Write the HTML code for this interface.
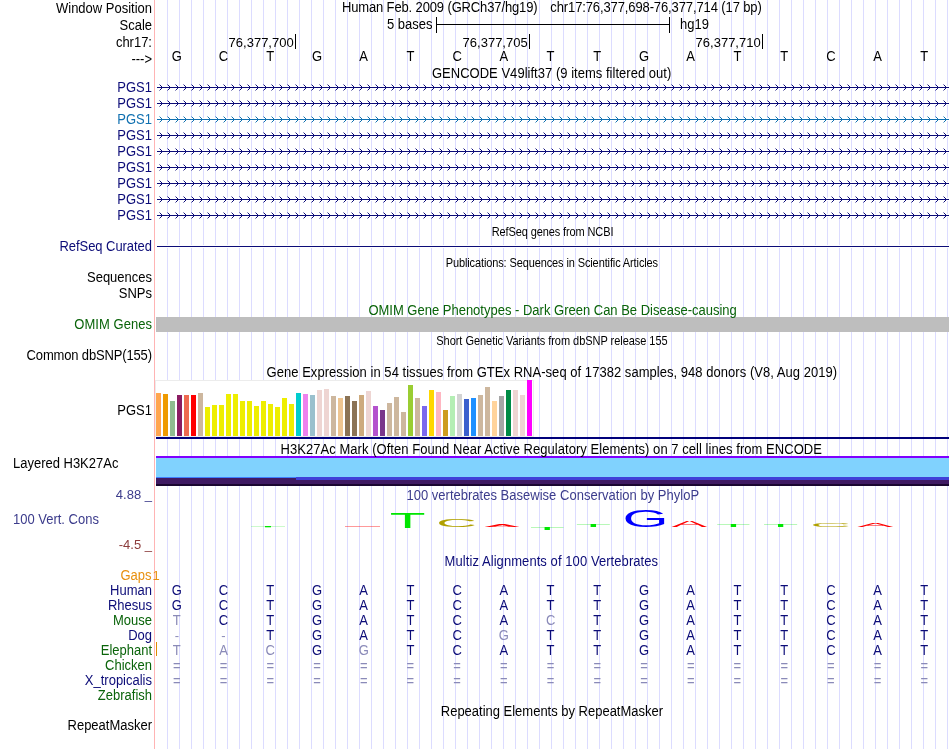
<!DOCTYPE html>
<html><head><meta charset="utf-8"><style>
html,body{margin:0;padding:0;background:#fff;width:950px;height:749px;overflow:hidden}
svg{display:block;will-change:transform}
text{font-family:'Liberation Sans',sans-serif;white-space:pre}
</style></head><body>
<svg width="950" height="749" viewBox="0 0 950 749">
<line x1="167.5" y1="0" x2="167.5" y2="749" stroke="#dcdcff" stroke-width="1"/>
<line x1="179.5" y1="0" x2="179.5" y2="749" stroke="#dcdcff" stroke-width="1"/>
<line x1="191.5" y1="0" x2="191.5" y2="749" stroke="#dcdcff" stroke-width="1"/>
<line x1="203.5" y1="0" x2="203.5" y2="749" stroke="#dcdcff" stroke-width="1"/>
<line x1="215.5" y1="0" x2="215.5" y2="749" stroke="#dcdcff" stroke-width="1"/>
<line x1="227.5" y1="0" x2="227.5" y2="749" stroke="#dcdcff" stroke-width="1"/>
<line x1="239.5" y1="0" x2="239.5" y2="749" stroke="#dcdcff" stroke-width="1"/>
<line x1="251.5" y1="0" x2="251.5" y2="749" stroke="#dcdcff" stroke-width="1"/>
<line x1="263.5" y1="0" x2="263.5" y2="749" stroke="#dcdcff" stroke-width="1"/>
<line x1="275.5" y1="0" x2="275.5" y2="749" stroke="#dcdcff" stroke-width="1"/>
<line x1="287.5" y1="0" x2="287.5" y2="749" stroke="#dcdcff" stroke-width="1"/>
<line x1="299.5" y1="0" x2="299.5" y2="749" stroke="#dcdcff" stroke-width="1"/>
<line x1="311.5" y1="0" x2="311.5" y2="749" stroke="#dcdcff" stroke-width="1"/>
<line x1="323.5" y1="0" x2="323.5" y2="749" stroke="#dcdcff" stroke-width="1"/>
<line x1="335.5" y1="0" x2="335.5" y2="749" stroke="#dcdcff" stroke-width="1"/>
<line x1="347.5" y1="0" x2="347.5" y2="749" stroke="#dcdcff" stroke-width="1"/>
<line x1="359.5" y1="0" x2="359.5" y2="749" stroke="#dcdcff" stroke-width="1"/>
<line x1="371.5" y1="0" x2="371.5" y2="749" stroke="#dcdcff" stroke-width="1"/>
<line x1="383.5" y1="0" x2="383.5" y2="749" stroke="#dcdcff" stroke-width="1"/>
<line x1="395.5" y1="0" x2="395.5" y2="749" stroke="#dcdcff" stroke-width="1"/>
<line x1="407.5" y1="0" x2="407.5" y2="749" stroke="#dcdcff" stroke-width="1"/>
<line x1="419.5" y1="0" x2="419.5" y2="749" stroke="#dcdcff" stroke-width="1"/>
<line x1="431.5" y1="0" x2="431.5" y2="749" stroke="#dcdcff" stroke-width="1"/>
<line x1="443.5" y1="0" x2="443.5" y2="749" stroke="#dcdcff" stroke-width="1"/>
<line x1="455.5" y1="0" x2="455.5" y2="749" stroke="#dcdcff" stroke-width="1"/>
<line x1="467.5" y1="0" x2="467.5" y2="749" stroke="#dcdcff" stroke-width="1"/>
<line x1="479.5" y1="0" x2="479.5" y2="749" stroke="#dcdcff" stroke-width="1"/>
<line x1="491.5" y1="0" x2="491.5" y2="749" stroke="#dcdcff" stroke-width="1"/>
<line x1="503.5" y1="0" x2="503.5" y2="749" stroke="#dcdcff" stroke-width="1"/>
<line x1="515.5" y1="0" x2="515.5" y2="749" stroke="#dcdcff" stroke-width="1"/>
<line x1="527.5" y1="0" x2="527.5" y2="749" stroke="#dcdcff" stroke-width="1"/>
<line x1="539.5" y1="0" x2="539.5" y2="749" stroke="#dcdcff" stroke-width="1"/>
<line x1="551.5" y1="0" x2="551.5" y2="749" stroke="#dcdcff" stroke-width="1"/>
<line x1="563.5" y1="0" x2="563.5" y2="749" stroke="#dcdcff" stroke-width="1"/>
<line x1="575.5" y1="0" x2="575.5" y2="749" stroke="#dcdcff" stroke-width="1"/>
<line x1="587.5" y1="0" x2="587.5" y2="749" stroke="#dcdcff" stroke-width="1"/>
<line x1="599.5" y1="0" x2="599.5" y2="749" stroke="#dcdcff" stroke-width="1"/>
<line x1="611.5" y1="0" x2="611.5" y2="749" stroke="#dcdcff" stroke-width="1"/>
<line x1="623.5" y1="0" x2="623.5" y2="749" stroke="#dcdcff" stroke-width="1"/>
<line x1="635.5" y1="0" x2="635.5" y2="749" stroke="#dcdcff" stroke-width="1"/>
<line x1="647.5" y1="0" x2="647.5" y2="749" stroke="#dcdcff" stroke-width="1"/>
<line x1="659.5" y1="0" x2="659.5" y2="749" stroke="#dcdcff" stroke-width="1"/>
<line x1="671.5" y1="0" x2="671.5" y2="749" stroke="#dcdcff" stroke-width="1"/>
<line x1="683.5" y1="0" x2="683.5" y2="749" stroke="#dcdcff" stroke-width="1"/>
<line x1="695.5" y1="0" x2="695.5" y2="749" stroke="#dcdcff" stroke-width="1"/>
<line x1="707.5" y1="0" x2="707.5" y2="749" stroke="#dcdcff" stroke-width="1"/>
<line x1="719.5" y1="0" x2="719.5" y2="749" stroke="#dcdcff" stroke-width="1"/>
<line x1="731.5" y1="0" x2="731.5" y2="749" stroke="#dcdcff" stroke-width="1"/>
<line x1="743.5" y1="0" x2="743.5" y2="749" stroke="#dcdcff" stroke-width="1"/>
<line x1="755.5" y1="0" x2="755.5" y2="749" stroke="#dcdcff" stroke-width="1"/>
<line x1="767.5" y1="0" x2="767.5" y2="749" stroke="#dcdcff" stroke-width="1"/>
<line x1="779.5" y1="0" x2="779.5" y2="749" stroke="#dcdcff" stroke-width="1"/>
<line x1="791.5" y1="0" x2="791.5" y2="749" stroke="#dcdcff" stroke-width="1"/>
<line x1="803.5" y1="0" x2="803.5" y2="749" stroke="#dcdcff" stroke-width="1"/>
<line x1="815.5" y1="0" x2="815.5" y2="749" stroke="#dcdcff" stroke-width="1"/>
<line x1="827.5" y1="0" x2="827.5" y2="749" stroke="#dcdcff" stroke-width="1"/>
<line x1="839.5" y1="0" x2="839.5" y2="749" stroke="#dcdcff" stroke-width="1"/>
<line x1="851.5" y1="0" x2="851.5" y2="749" stroke="#dcdcff" stroke-width="1"/>
<line x1="863.5" y1="0" x2="863.5" y2="749" stroke="#dcdcff" stroke-width="1"/>
<line x1="875.5" y1="0" x2="875.5" y2="749" stroke="#dcdcff" stroke-width="1"/>
<line x1="887.5" y1="0" x2="887.5" y2="749" stroke="#dcdcff" stroke-width="1"/>
<line x1="899.5" y1="0" x2="899.5" y2="749" stroke="#dcdcff" stroke-width="1"/>
<line x1="911.5" y1="0" x2="911.5" y2="749" stroke="#dcdcff" stroke-width="1"/>
<line x1="923.5" y1="0" x2="923.5" y2="749" stroke="#dcdcff" stroke-width="1"/>
<line x1="935.5" y1="0" x2="935.5" y2="749" stroke="#dcdcff" stroke-width="1"/>
<line x1="947.5" y1="0" x2="947.5" y2="749" stroke="#dcdcff" stroke-width="1"/>
<line x1="154.5" y1="0" x2="154.5" y2="749" stroke="#ffb4b4" stroke-width="1"/>
<text x="152" y="13" font-size="13" fill="#000" text-anchor="end" transform="matrix(1,0,0,1.08,0,-1.040)" >Window Position</text>
<text x="152" y="30" font-size="13" fill="#000" text-anchor="end" transform="matrix(1,0,0,1.08,0,-2.400)" >Scale</text>
<text x="387" y="29" font-size="13" fill="#000" text-anchor="start" transform="matrix(1,0,0,1.08,0,-2.320)" >5 bases</text>
<line x1="436.5" y1="17" x2="436.5" y2="33" stroke="#000"/>
<line x1="669.5" y1="17" x2="669.5" y2="33" stroke="#000"/>
<line x1="436" y1="24.5" x2="670" y2="24.5" stroke="#000"/>
<text x="680" y="29" font-size="13" fill="#000" text-anchor="start" transform="matrix(1,0,0,1.08,0,-2.320)" >hg19</text>
<text x="152" y="47" font-size="13" fill="#000" text-anchor="end" transform="matrix(1,0,0,1.08,0,-3.760)" >chr17:</text>
<text x="293.7" y="47" font-size="13" fill="#000" text-anchor="end"  >76,377,700</text>
<line x1="295.5" y1="34" x2="295.5" y2="49" stroke="#000"/>
<text x="527.7" y="47" font-size="13" fill="#000" text-anchor="end"  >76,377,705</text>
<line x1="529.5" y1="34" x2="529.5" y2="49" stroke="#000"/>
<text x="760.7" y="47" font-size="13" fill="#000" text-anchor="end"  >76,377,710</text>
<line x1="762.5" y1="34" x2="762.5" y2="49" stroke="#000"/>
<text x="152" y="64" font-size="13" fill="#000" text-anchor="end" transform="matrix(1,0,0,1.08,0,-5.120)" >---&gt;</text>
<text x="176.8" y="61" font-size="13" fill="#000" text-anchor="middle" transform="matrix(1,0,0,1.08,0,-4.880)" >G</text>
<text x="223.5" y="61" font-size="13" fill="#000" text-anchor="middle" transform="matrix(1,0,0,1.08,0,-4.880)" >C</text>
<text x="270.2" y="61" font-size="13" fill="#000" text-anchor="middle" transform="matrix(1,0,0,1.08,0,-4.880)" >T</text>
<text x="317.0" y="61" font-size="13" fill="#000" text-anchor="middle" transform="matrix(1,0,0,1.08,0,-4.880)" >G</text>
<text x="363.7" y="61" font-size="13" fill="#000" text-anchor="middle" transform="matrix(1,0,0,1.08,0,-4.880)" >A</text>
<text x="410.4" y="61" font-size="13" fill="#000" text-anchor="middle" transform="matrix(1,0,0,1.08,0,-4.880)" >T</text>
<text x="457.1" y="61" font-size="13" fill="#000" text-anchor="middle" transform="matrix(1,0,0,1.08,0,-4.880)" >C</text>
<text x="503.8" y="61" font-size="13" fill="#000" text-anchor="middle" transform="matrix(1,0,0,1.08,0,-4.880)" >A</text>
<text x="550.6" y="61" font-size="13" fill="#000" text-anchor="middle" transform="matrix(1,0,0,1.08,0,-4.880)" >T</text>
<text x="597.3" y="61" font-size="13" fill="#000" text-anchor="middle" transform="matrix(1,0,0,1.08,0,-4.880)" >T</text>
<text x="644.0" y="61" font-size="13" fill="#000" text-anchor="middle" transform="matrix(1,0,0,1.08,0,-4.880)" >G</text>
<text x="690.7" y="61" font-size="13" fill="#000" text-anchor="middle" transform="matrix(1,0,0,1.08,0,-4.880)" >A</text>
<text x="737.4" y="61" font-size="13" fill="#000" text-anchor="middle" transform="matrix(1,0,0,1.08,0,-4.880)" >T</text>
<text x="784.2" y="61" font-size="13" fill="#000" text-anchor="middle" transform="matrix(1,0,0,1.08,0,-4.880)" >T</text>
<text x="830.9" y="61" font-size="13" fill="#000" text-anchor="middle" transform="matrix(1,0,0,1.08,0,-4.880)" >C</text>
<text x="877.6" y="61" font-size="13" fill="#000" text-anchor="middle" transform="matrix(1,0,0,1.08,0,-4.880)" >A</text>
<text x="924.3" y="61" font-size="13" fill="#000" text-anchor="middle" transform="matrix(1,0,0,1.08,0,-4.880)" >T</text>
<text x="152" y="92" font-size="13" fill="#0c0c78" text-anchor="end" transform="matrix(1,0,0,1.08,0,-7.360)" >PGS1</text>
<rect x="157" y="86" width="792" height="3" fill="#fff"/>
<rect x="157" y="87" width="792" height="1" fill="#0c0c78"/>
<path d="M161,86h1v3h-1zM160,85h1v1h-1zM160,89h1v1h-1zM169,86h1v3h-1zM168,85h1v1h-1zM168,89h1v1h-1zM177,86h1v3h-1zM176,85h1v1h-1zM176,89h1v1h-1zM185,86h1v3h-1zM184,85h1v1h-1zM184,89h1v1h-1zM193,86h1v3h-1zM192,85h1v1h-1zM192,89h1v1h-1zM201,86h1v3h-1zM200,85h1v1h-1zM200,89h1v1h-1zM209,86h1v3h-1zM208,85h1v1h-1zM208,89h1v1h-1zM217,86h1v3h-1zM216,85h1v1h-1zM216,89h1v1h-1zM225,86h1v3h-1zM224,85h1v1h-1zM224,89h1v1h-1zM233,86h1v3h-1zM232,85h1v1h-1zM232,89h1v1h-1zM241,86h1v3h-1zM240,85h1v1h-1zM240,89h1v1h-1zM249,86h1v3h-1zM248,85h1v1h-1zM248,89h1v1h-1zM257,86h1v3h-1zM256,85h1v1h-1zM256,89h1v1h-1zM265,86h1v3h-1zM264,85h1v1h-1zM264,89h1v1h-1zM273,86h1v3h-1zM272,85h1v1h-1zM272,89h1v1h-1zM281,86h1v3h-1zM280,85h1v1h-1zM280,89h1v1h-1zM289,86h1v3h-1zM288,85h1v1h-1zM288,89h1v1h-1zM297,86h1v3h-1zM296,85h1v1h-1zM296,89h1v1h-1zM305,86h1v3h-1zM304,85h1v1h-1zM304,89h1v1h-1zM313,86h1v3h-1zM312,85h1v1h-1zM312,89h1v1h-1zM321,86h1v3h-1zM320,85h1v1h-1zM320,89h1v1h-1zM329,86h1v3h-1zM328,85h1v1h-1zM328,89h1v1h-1zM337,86h1v3h-1zM336,85h1v1h-1zM336,89h1v1h-1zM345,86h1v3h-1zM344,85h1v1h-1zM344,89h1v1h-1zM353,86h1v3h-1zM352,85h1v1h-1zM352,89h1v1h-1zM361,86h1v3h-1zM360,85h1v1h-1zM360,89h1v1h-1zM369,86h1v3h-1zM368,85h1v1h-1zM368,89h1v1h-1zM377,86h1v3h-1zM376,85h1v1h-1zM376,89h1v1h-1zM385,86h1v3h-1zM384,85h1v1h-1zM384,89h1v1h-1zM393,86h1v3h-1zM392,85h1v1h-1zM392,89h1v1h-1zM401,86h1v3h-1zM400,85h1v1h-1zM400,89h1v1h-1zM409,86h1v3h-1zM408,85h1v1h-1zM408,89h1v1h-1zM417,86h1v3h-1zM416,85h1v1h-1zM416,89h1v1h-1zM425,86h1v3h-1zM424,85h1v1h-1zM424,89h1v1h-1zM433,86h1v3h-1zM432,85h1v1h-1zM432,89h1v1h-1zM441,86h1v3h-1zM440,85h1v1h-1zM440,89h1v1h-1zM449,86h1v3h-1zM448,85h1v1h-1zM448,89h1v1h-1zM457,86h1v3h-1zM456,85h1v1h-1zM456,89h1v1h-1zM465,86h1v3h-1zM464,85h1v1h-1zM464,89h1v1h-1zM473,86h1v3h-1zM472,85h1v1h-1zM472,89h1v1h-1zM481,86h1v3h-1zM480,85h1v1h-1zM480,89h1v1h-1zM489,86h1v3h-1zM488,85h1v1h-1zM488,89h1v1h-1zM497,86h1v3h-1zM496,85h1v1h-1zM496,89h1v1h-1zM505,86h1v3h-1zM504,85h1v1h-1zM504,89h1v1h-1zM513,86h1v3h-1zM512,85h1v1h-1zM512,89h1v1h-1zM521,86h1v3h-1zM520,85h1v1h-1zM520,89h1v1h-1zM529,86h1v3h-1zM528,85h1v1h-1zM528,89h1v1h-1zM537,86h1v3h-1zM536,85h1v1h-1zM536,89h1v1h-1zM545,86h1v3h-1zM544,85h1v1h-1zM544,89h1v1h-1zM553,86h1v3h-1zM552,85h1v1h-1zM552,89h1v1h-1zM561,86h1v3h-1zM560,85h1v1h-1zM560,89h1v1h-1zM569,86h1v3h-1zM568,85h1v1h-1zM568,89h1v1h-1zM577,86h1v3h-1zM576,85h1v1h-1zM576,89h1v1h-1zM585,86h1v3h-1zM584,85h1v1h-1zM584,89h1v1h-1zM593,86h1v3h-1zM592,85h1v1h-1zM592,89h1v1h-1zM601,86h1v3h-1zM600,85h1v1h-1zM600,89h1v1h-1zM609,86h1v3h-1zM608,85h1v1h-1zM608,89h1v1h-1zM617,86h1v3h-1zM616,85h1v1h-1zM616,89h1v1h-1zM625,86h1v3h-1zM624,85h1v1h-1zM624,89h1v1h-1zM633,86h1v3h-1zM632,85h1v1h-1zM632,89h1v1h-1zM641,86h1v3h-1zM640,85h1v1h-1zM640,89h1v1h-1zM649,86h1v3h-1zM648,85h1v1h-1zM648,89h1v1h-1zM657,86h1v3h-1zM656,85h1v1h-1zM656,89h1v1h-1zM665,86h1v3h-1zM664,85h1v1h-1zM664,89h1v1h-1zM673,86h1v3h-1zM672,85h1v1h-1zM672,89h1v1h-1zM681,86h1v3h-1zM680,85h1v1h-1zM680,89h1v1h-1zM689,86h1v3h-1zM688,85h1v1h-1zM688,89h1v1h-1zM697,86h1v3h-1zM696,85h1v1h-1zM696,89h1v1h-1zM705,86h1v3h-1zM704,85h1v1h-1zM704,89h1v1h-1zM713,86h1v3h-1zM712,85h1v1h-1zM712,89h1v1h-1zM721,86h1v3h-1zM720,85h1v1h-1zM720,89h1v1h-1zM729,86h1v3h-1zM728,85h1v1h-1zM728,89h1v1h-1zM737,86h1v3h-1zM736,85h1v1h-1zM736,89h1v1h-1zM745,86h1v3h-1zM744,85h1v1h-1zM744,89h1v1h-1zM753,86h1v3h-1zM752,85h1v1h-1zM752,89h1v1h-1zM761,86h1v3h-1zM760,85h1v1h-1zM760,89h1v1h-1zM769,86h1v3h-1zM768,85h1v1h-1zM768,89h1v1h-1zM777,86h1v3h-1zM776,85h1v1h-1zM776,89h1v1h-1zM785,86h1v3h-1zM784,85h1v1h-1zM784,89h1v1h-1zM793,86h1v3h-1zM792,85h1v1h-1zM792,89h1v1h-1zM801,86h1v3h-1zM800,85h1v1h-1zM800,89h1v1h-1zM809,86h1v3h-1zM808,85h1v1h-1zM808,89h1v1h-1zM817,86h1v3h-1zM816,85h1v1h-1zM816,89h1v1h-1zM825,86h1v3h-1zM824,85h1v1h-1zM824,89h1v1h-1zM833,86h1v3h-1zM832,85h1v1h-1zM832,89h1v1h-1zM841,86h1v3h-1zM840,85h1v1h-1zM840,89h1v1h-1zM849,86h1v3h-1zM848,85h1v1h-1zM848,89h1v1h-1zM857,86h1v3h-1zM856,85h1v1h-1zM856,89h1v1h-1zM865,86h1v3h-1zM864,85h1v1h-1zM864,89h1v1h-1zM873,86h1v3h-1zM872,85h1v1h-1zM872,89h1v1h-1zM881,86h1v3h-1zM880,85h1v1h-1zM880,89h1v1h-1zM889,86h1v3h-1zM888,85h1v1h-1zM888,89h1v1h-1zM897,86h1v3h-1zM896,85h1v1h-1zM896,89h1v1h-1zM905,86h1v3h-1zM904,85h1v1h-1zM904,89h1v1h-1zM913,86h1v3h-1zM912,85h1v1h-1zM912,89h1v1h-1zM921,86h1v3h-1zM920,85h1v1h-1zM920,89h1v1h-1zM929,86h1v3h-1zM928,85h1v1h-1zM928,89h1v1h-1zM937,86h1v3h-1zM936,85h1v1h-1zM936,89h1v1h-1zM945,86h1v3h-1zM944,85h1v1h-1zM944,89h1v1h-1z" fill="#0c0c78"/>
<path d="M159,84h1v1h-1zM159,90h1v1h-1zM167,84h1v1h-1zM167,90h1v1h-1zM175,84h1v1h-1zM175,90h1v1h-1zM183,84h1v1h-1zM183,90h1v1h-1zM191,84h1v1h-1zM191,90h1v1h-1zM199,84h1v1h-1zM199,90h1v1h-1zM207,84h1v1h-1zM207,90h1v1h-1zM215,84h1v1h-1zM215,90h1v1h-1zM223,84h1v1h-1zM223,90h1v1h-1zM231,84h1v1h-1zM231,90h1v1h-1zM239,84h1v1h-1zM239,90h1v1h-1zM247,84h1v1h-1zM247,90h1v1h-1zM255,84h1v1h-1zM255,90h1v1h-1zM263,84h1v1h-1zM263,90h1v1h-1zM271,84h1v1h-1zM271,90h1v1h-1zM279,84h1v1h-1zM279,90h1v1h-1zM287,84h1v1h-1zM287,90h1v1h-1zM295,84h1v1h-1zM295,90h1v1h-1zM303,84h1v1h-1zM303,90h1v1h-1zM311,84h1v1h-1zM311,90h1v1h-1zM319,84h1v1h-1zM319,90h1v1h-1zM327,84h1v1h-1zM327,90h1v1h-1zM335,84h1v1h-1zM335,90h1v1h-1zM343,84h1v1h-1zM343,90h1v1h-1zM351,84h1v1h-1zM351,90h1v1h-1zM359,84h1v1h-1zM359,90h1v1h-1zM367,84h1v1h-1zM367,90h1v1h-1zM375,84h1v1h-1zM375,90h1v1h-1zM383,84h1v1h-1zM383,90h1v1h-1zM391,84h1v1h-1zM391,90h1v1h-1zM399,84h1v1h-1zM399,90h1v1h-1zM407,84h1v1h-1zM407,90h1v1h-1zM415,84h1v1h-1zM415,90h1v1h-1zM423,84h1v1h-1zM423,90h1v1h-1zM431,84h1v1h-1zM431,90h1v1h-1zM439,84h1v1h-1zM439,90h1v1h-1zM447,84h1v1h-1zM447,90h1v1h-1zM455,84h1v1h-1zM455,90h1v1h-1zM463,84h1v1h-1zM463,90h1v1h-1zM471,84h1v1h-1zM471,90h1v1h-1zM479,84h1v1h-1zM479,90h1v1h-1zM487,84h1v1h-1zM487,90h1v1h-1zM495,84h1v1h-1zM495,90h1v1h-1zM503,84h1v1h-1zM503,90h1v1h-1zM511,84h1v1h-1zM511,90h1v1h-1zM519,84h1v1h-1zM519,90h1v1h-1zM527,84h1v1h-1zM527,90h1v1h-1zM535,84h1v1h-1zM535,90h1v1h-1zM543,84h1v1h-1zM543,90h1v1h-1zM551,84h1v1h-1zM551,90h1v1h-1zM559,84h1v1h-1zM559,90h1v1h-1zM567,84h1v1h-1zM567,90h1v1h-1zM575,84h1v1h-1zM575,90h1v1h-1zM583,84h1v1h-1zM583,90h1v1h-1zM591,84h1v1h-1zM591,90h1v1h-1zM599,84h1v1h-1zM599,90h1v1h-1zM607,84h1v1h-1zM607,90h1v1h-1zM615,84h1v1h-1zM615,90h1v1h-1zM623,84h1v1h-1zM623,90h1v1h-1zM631,84h1v1h-1zM631,90h1v1h-1zM639,84h1v1h-1zM639,90h1v1h-1zM647,84h1v1h-1zM647,90h1v1h-1zM655,84h1v1h-1zM655,90h1v1h-1zM663,84h1v1h-1zM663,90h1v1h-1zM671,84h1v1h-1zM671,90h1v1h-1zM679,84h1v1h-1zM679,90h1v1h-1zM687,84h1v1h-1zM687,90h1v1h-1zM695,84h1v1h-1zM695,90h1v1h-1zM703,84h1v1h-1zM703,90h1v1h-1zM711,84h1v1h-1zM711,90h1v1h-1zM719,84h1v1h-1zM719,90h1v1h-1zM727,84h1v1h-1zM727,90h1v1h-1zM735,84h1v1h-1zM735,90h1v1h-1zM743,84h1v1h-1zM743,90h1v1h-1zM751,84h1v1h-1zM751,90h1v1h-1zM759,84h1v1h-1zM759,90h1v1h-1zM767,84h1v1h-1zM767,90h1v1h-1zM775,84h1v1h-1zM775,90h1v1h-1zM783,84h1v1h-1zM783,90h1v1h-1zM791,84h1v1h-1zM791,90h1v1h-1zM799,84h1v1h-1zM799,90h1v1h-1zM807,84h1v1h-1zM807,90h1v1h-1zM815,84h1v1h-1zM815,90h1v1h-1zM823,84h1v1h-1zM823,90h1v1h-1zM831,84h1v1h-1zM831,90h1v1h-1zM839,84h1v1h-1zM839,90h1v1h-1zM847,84h1v1h-1zM847,90h1v1h-1zM855,84h1v1h-1zM855,90h1v1h-1zM863,84h1v1h-1zM863,90h1v1h-1zM871,84h1v1h-1zM871,90h1v1h-1zM879,84h1v1h-1zM879,90h1v1h-1zM887,84h1v1h-1zM887,90h1v1h-1zM895,84h1v1h-1zM895,90h1v1h-1zM903,84h1v1h-1zM903,90h1v1h-1zM911,84h1v1h-1zM911,90h1v1h-1zM919,84h1v1h-1zM919,90h1v1h-1zM927,84h1v1h-1zM927,90h1v1h-1zM935,84h1v1h-1zM935,90h1v1h-1zM943,84h1v1h-1zM943,90h1v1h-1z" fill="#0c0c78" opacity="0.45"/>
<text x="152" y="108" font-size="13" fill="#0c0c78" text-anchor="end" transform="matrix(1,0,0,1.08,0,-8.640)" >PGS1</text>
<rect x="157" y="102" width="792" height="3" fill="#fff"/>
<rect x="157" y="103" width="792" height="1" fill="#0c0c78"/>
<path d="M161,102h1v3h-1zM160,101h1v1h-1zM160,105h1v1h-1zM169,102h1v3h-1zM168,101h1v1h-1zM168,105h1v1h-1zM177,102h1v3h-1zM176,101h1v1h-1zM176,105h1v1h-1zM185,102h1v3h-1zM184,101h1v1h-1zM184,105h1v1h-1zM193,102h1v3h-1zM192,101h1v1h-1zM192,105h1v1h-1zM201,102h1v3h-1zM200,101h1v1h-1zM200,105h1v1h-1zM209,102h1v3h-1zM208,101h1v1h-1zM208,105h1v1h-1zM217,102h1v3h-1zM216,101h1v1h-1zM216,105h1v1h-1zM225,102h1v3h-1zM224,101h1v1h-1zM224,105h1v1h-1zM233,102h1v3h-1zM232,101h1v1h-1zM232,105h1v1h-1zM241,102h1v3h-1zM240,101h1v1h-1zM240,105h1v1h-1zM249,102h1v3h-1zM248,101h1v1h-1zM248,105h1v1h-1zM257,102h1v3h-1zM256,101h1v1h-1zM256,105h1v1h-1zM265,102h1v3h-1zM264,101h1v1h-1zM264,105h1v1h-1zM273,102h1v3h-1zM272,101h1v1h-1zM272,105h1v1h-1zM281,102h1v3h-1zM280,101h1v1h-1zM280,105h1v1h-1zM289,102h1v3h-1zM288,101h1v1h-1zM288,105h1v1h-1zM297,102h1v3h-1zM296,101h1v1h-1zM296,105h1v1h-1zM305,102h1v3h-1zM304,101h1v1h-1zM304,105h1v1h-1zM313,102h1v3h-1zM312,101h1v1h-1zM312,105h1v1h-1zM321,102h1v3h-1zM320,101h1v1h-1zM320,105h1v1h-1zM329,102h1v3h-1zM328,101h1v1h-1zM328,105h1v1h-1zM337,102h1v3h-1zM336,101h1v1h-1zM336,105h1v1h-1zM345,102h1v3h-1zM344,101h1v1h-1zM344,105h1v1h-1zM353,102h1v3h-1zM352,101h1v1h-1zM352,105h1v1h-1zM361,102h1v3h-1zM360,101h1v1h-1zM360,105h1v1h-1zM369,102h1v3h-1zM368,101h1v1h-1zM368,105h1v1h-1zM377,102h1v3h-1zM376,101h1v1h-1zM376,105h1v1h-1zM385,102h1v3h-1zM384,101h1v1h-1zM384,105h1v1h-1zM393,102h1v3h-1zM392,101h1v1h-1zM392,105h1v1h-1zM401,102h1v3h-1zM400,101h1v1h-1zM400,105h1v1h-1zM409,102h1v3h-1zM408,101h1v1h-1zM408,105h1v1h-1zM417,102h1v3h-1zM416,101h1v1h-1zM416,105h1v1h-1zM425,102h1v3h-1zM424,101h1v1h-1zM424,105h1v1h-1zM433,102h1v3h-1zM432,101h1v1h-1zM432,105h1v1h-1zM441,102h1v3h-1zM440,101h1v1h-1zM440,105h1v1h-1zM449,102h1v3h-1zM448,101h1v1h-1zM448,105h1v1h-1zM457,102h1v3h-1zM456,101h1v1h-1zM456,105h1v1h-1zM465,102h1v3h-1zM464,101h1v1h-1zM464,105h1v1h-1zM473,102h1v3h-1zM472,101h1v1h-1zM472,105h1v1h-1zM481,102h1v3h-1zM480,101h1v1h-1zM480,105h1v1h-1zM489,102h1v3h-1zM488,101h1v1h-1zM488,105h1v1h-1zM497,102h1v3h-1zM496,101h1v1h-1zM496,105h1v1h-1zM505,102h1v3h-1zM504,101h1v1h-1zM504,105h1v1h-1zM513,102h1v3h-1zM512,101h1v1h-1zM512,105h1v1h-1zM521,102h1v3h-1zM520,101h1v1h-1zM520,105h1v1h-1zM529,102h1v3h-1zM528,101h1v1h-1zM528,105h1v1h-1zM537,102h1v3h-1zM536,101h1v1h-1zM536,105h1v1h-1zM545,102h1v3h-1zM544,101h1v1h-1zM544,105h1v1h-1zM553,102h1v3h-1zM552,101h1v1h-1zM552,105h1v1h-1zM561,102h1v3h-1zM560,101h1v1h-1zM560,105h1v1h-1zM569,102h1v3h-1zM568,101h1v1h-1zM568,105h1v1h-1zM577,102h1v3h-1zM576,101h1v1h-1zM576,105h1v1h-1zM585,102h1v3h-1zM584,101h1v1h-1zM584,105h1v1h-1zM593,102h1v3h-1zM592,101h1v1h-1zM592,105h1v1h-1zM601,102h1v3h-1zM600,101h1v1h-1zM600,105h1v1h-1zM609,102h1v3h-1zM608,101h1v1h-1zM608,105h1v1h-1zM617,102h1v3h-1zM616,101h1v1h-1zM616,105h1v1h-1zM625,102h1v3h-1zM624,101h1v1h-1zM624,105h1v1h-1zM633,102h1v3h-1zM632,101h1v1h-1zM632,105h1v1h-1zM641,102h1v3h-1zM640,101h1v1h-1zM640,105h1v1h-1zM649,102h1v3h-1zM648,101h1v1h-1zM648,105h1v1h-1zM657,102h1v3h-1zM656,101h1v1h-1zM656,105h1v1h-1zM665,102h1v3h-1zM664,101h1v1h-1zM664,105h1v1h-1zM673,102h1v3h-1zM672,101h1v1h-1zM672,105h1v1h-1zM681,102h1v3h-1zM680,101h1v1h-1zM680,105h1v1h-1zM689,102h1v3h-1zM688,101h1v1h-1zM688,105h1v1h-1zM697,102h1v3h-1zM696,101h1v1h-1zM696,105h1v1h-1zM705,102h1v3h-1zM704,101h1v1h-1zM704,105h1v1h-1zM713,102h1v3h-1zM712,101h1v1h-1zM712,105h1v1h-1zM721,102h1v3h-1zM720,101h1v1h-1zM720,105h1v1h-1zM729,102h1v3h-1zM728,101h1v1h-1zM728,105h1v1h-1zM737,102h1v3h-1zM736,101h1v1h-1zM736,105h1v1h-1zM745,102h1v3h-1zM744,101h1v1h-1zM744,105h1v1h-1zM753,102h1v3h-1zM752,101h1v1h-1zM752,105h1v1h-1zM761,102h1v3h-1zM760,101h1v1h-1zM760,105h1v1h-1zM769,102h1v3h-1zM768,101h1v1h-1zM768,105h1v1h-1zM777,102h1v3h-1zM776,101h1v1h-1zM776,105h1v1h-1zM785,102h1v3h-1zM784,101h1v1h-1zM784,105h1v1h-1zM793,102h1v3h-1zM792,101h1v1h-1zM792,105h1v1h-1zM801,102h1v3h-1zM800,101h1v1h-1zM800,105h1v1h-1zM809,102h1v3h-1zM808,101h1v1h-1zM808,105h1v1h-1zM817,102h1v3h-1zM816,101h1v1h-1zM816,105h1v1h-1zM825,102h1v3h-1zM824,101h1v1h-1zM824,105h1v1h-1zM833,102h1v3h-1zM832,101h1v1h-1zM832,105h1v1h-1zM841,102h1v3h-1zM840,101h1v1h-1zM840,105h1v1h-1zM849,102h1v3h-1zM848,101h1v1h-1zM848,105h1v1h-1zM857,102h1v3h-1zM856,101h1v1h-1zM856,105h1v1h-1zM865,102h1v3h-1zM864,101h1v1h-1zM864,105h1v1h-1zM873,102h1v3h-1zM872,101h1v1h-1zM872,105h1v1h-1zM881,102h1v3h-1zM880,101h1v1h-1zM880,105h1v1h-1zM889,102h1v3h-1zM888,101h1v1h-1zM888,105h1v1h-1zM897,102h1v3h-1zM896,101h1v1h-1zM896,105h1v1h-1zM905,102h1v3h-1zM904,101h1v1h-1zM904,105h1v1h-1zM913,102h1v3h-1zM912,101h1v1h-1zM912,105h1v1h-1zM921,102h1v3h-1zM920,101h1v1h-1zM920,105h1v1h-1zM929,102h1v3h-1zM928,101h1v1h-1zM928,105h1v1h-1zM937,102h1v3h-1zM936,101h1v1h-1zM936,105h1v1h-1zM945,102h1v3h-1zM944,101h1v1h-1zM944,105h1v1h-1z" fill="#0c0c78"/>
<path d="M159,100h1v1h-1zM159,106h1v1h-1zM167,100h1v1h-1zM167,106h1v1h-1zM175,100h1v1h-1zM175,106h1v1h-1zM183,100h1v1h-1zM183,106h1v1h-1zM191,100h1v1h-1zM191,106h1v1h-1zM199,100h1v1h-1zM199,106h1v1h-1zM207,100h1v1h-1zM207,106h1v1h-1zM215,100h1v1h-1zM215,106h1v1h-1zM223,100h1v1h-1zM223,106h1v1h-1zM231,100h1v1h-1zM231,106h1v1h-1zM239,100h1v1h-1zM239,106h1v1h-1zM247,100h1v1h-1zM247,106h1v1h-1zM255,100h1v1h-1zM255,106h1v1h-1zM263,100h1v1h-1zM263,106h1v1h-1zM271,100h1v1h-1zM271,106h1v1h-1zM279,100h1v1h-1zM279,106h1v1h-1zM287,100h1v1h-1zM287,106h1v1h-1zM295,100h1v1h-1zM295,106h1v1h-1zM303,100h1v1h-1zM303,106h1v1h-1zM311,100h1v1h-1zM311,106h1v1h-1zM319,100h1v1h-1zM319,106h1v1h-1zM327,100h1v1h-1zM327,106h1v1h-1zM335,100h1v1h-1zM335,106h1v1h-1zM343,100h1v1h-1zM343,106h1v1h-1zM351,100h1v1h-1zM351,106h1v1h-1zM359,100h1v1h-1zM359,106h1v1h-1zM367,100h1v1h-1zM367,106h1v1h-1zM375,100h1v1h-1zM375,106h1v1h-1zM383,100h1v1h-1zM383,106h1v1h-1zM391,100h1v1h-1zM391,106h1v1h-1zM399,100h1v1h-1zM399,106h1v1h-1zM407,100h1v1h-1zM407,106h1v1h-1zM415,100h1v1h-1zM415,106h1v1h-1zM423,100h1v1h-1zM423,106h1v1h-1zM431,100h1v1h-1zM431,106h1v1h-1zM439,100h1v1h-1zM439,106h1v1h-1zM447,100h1v1h-1zM447,106h1v1h-1zM455,100h1v1h-1zM455,106h1v1h-1zM463,100h1v1h-1zM463,106h1v1h-1zM471,100h1v1h-1zM471,106h1v1h-1zM479,100h1v1h-1zM479,106h1v1h-1zM487,100h1v1h-1zM487,106h1v1h-1zM495,100h1v1h-1zM495,106h1v1h-1zM503,100h1v1h-1zM503,106h1v1h-1zM511,100h1v1h-1zM511,106h1v1h-1zM519,100h1v1h-1zM519,106h1v1h-1zM527,100h1v1h-1zM527,106h1v1h-1zM535,100h1v1h-1zM535,106h1v1h-1zM543,100h1v1h-1zM543,106h1v1h-1zM551,100h1v1h-1zM551,106h1v1h-1zM559,100h1v1h-1zM559,106h1v1h-1zM567,100h1v1h-1zM567,106h1v1h-1zM575,100h1v1h-1zM575,106h1v1h-1zM583,100h1v1h-1zM583,106h1v1h-1zM591,100h1v1h-1zM591,106h1v1h-1zM599,100h1v1h-1zM599,106h1v1h-1zM607,100h1v1h-1zM607,106h1v1h-1zM615,100h1v1h-1zM615,106h1v1h-1zM623,100h1v1h-1zM623,106h1v1h-1zM631,100h1v1h-1zM631,106h1v1h-1zM639,100h1v1h-1zM639,106h1v1h-1zM647,100h1v1h-1zM647,106h1v1h-1zM655,100h1v1h-1zM655,106h1v1h-1zM663,100h1v1h-1zM663,106h1v1h-1zM671,100h1v1h-1zM671,106h1v1h-1zM679,100h1v1h-1zM679,106h1v1h-1zM687,100h1v1h-1zM687,106h1v1h-1zM695,100h1v1h-1zM695,106h1v1h-1zM703,100h1v1h-1zM703,106h1v1h-1zM711,100h1v1h-1zM711,106h1v1h-1zM719,100h1v1h-1zM719,106h1v1h-1zM727,100h1v1h-1zM727,106h1v1h-1zM735,100h1v1h-1zM735,106h1v1h-1zM743,100h1v1h-1zM743,106h1v1h-1zM751,100h1v1h-1zM751,106h1v1h-1zM759,100h1v1h-1zM759,106h1v1h-1zM767,100h1v1h-1zM767,106h1v1h-1zM775,100h1v1h-1zM775,106h1v1h-1zM783,100h1v1h-1zM783,106h1v1h-1zM791,100h1v1h-1zM791,106h1v1h-1zM799,100h1v1h-1zM799,106h1v1h-1zM807,100h1v1h-1zM807,106h1v1h-1zM815,100h1v1h-1zM815,106h1v1h-1zM823,100h1v1h-1zM823,106h1v1h-1zM831,100h1v1h-1zM831,106h1v1h-1zM839,100h1v1h-1zM839,106h1v1h-1zM847,100h1v1h-1zM847,106h1v1h-1zM855,100h1v1h-1zM855,106h1v1h-1zM863,100h1v1h-1zM863,106h1v1h-1zM871,100h1v1h-1zM871,106h1v1h-1zM879,100h1v1h-1zM879,106h1v1h-1zM887,100h1v1h-1zM887,106h1v1h-1zM895,100h1v1h-1zM895,106h1v1h-1zM903,100h1v1h-1zM903,106h1v1h-1zM911,100h1v1h-1zM911,106h1v1h-1zM919,100h1v1h-1zM919,106h1v1h-1zM927,100h1v1h-1zM927,106h1v1h-1zM935,100h1v1h-1zM935,106h1v1h-1zM943,100h1v1h-1zM943,106h1v1h-1z" fill="#0c0c78" opacity="0.45"/>
<text x="152" y="124" font-size="13" fill="#1070b0" text-anchor="end" transform="matrix(1,0,0,1.08,0,-9.920)" >PGS1</text>
<rect x="157" y="118" width="792" height="3" fill="#fff"/>
<rect x="157" y="119" width="792" height="1" fill="#1070b0"/>
<path d="M161,118h1v3h-1zM160,117h1v1h-1zM160,121h1v1h-1zM169,118h1v3h-1zM168,117h1v1h-1zM168,121h1v1h-1zM177,118h1v3h-1zM176,117h1v1h-1zM176,121h1v1h-1zM185,118h1v3h-1zM184,117h1v1h-1zM184,121h1v1h-1zM193,118h1v3h-1zM192,117h1v1h-1zM192,121h1v1h-1zM201,118h1v3h-1zM200,117h1v1h-1zM200,121h1v1h-1zM209,118h1v3h-1zM208,117h1v1h-1zM208,121h1v1h-1zM217,118h1v3h-1zM216,117h1v1h-1zM216,121h1v1h-1zM225,118h1v3h-1zM224,117h1v1h-1zM224,121h1v1h-1zM233,118h1v3h-1zM232,117h1v1h-1zM232,121h1v1h-1zM241,118h1v3h-1zM240,117h1v1h-1zM240,121h1v1h-1zM249,118h1v3h-1zM248,117h1v1h-1zM248,121h1v1h-1zM257,118h1v3h-1zM256,117h1v1h-1zM256,121h1v1h-1zM265,118h1v3h-1zM264,117h1v1h-1zM264,121h1v1h-1zM273,118h1v3h-1zM272,117h1v1h-1zM272,121h1v1h-1zM281,118h1v3h-1zM280,117h1v1h-1zM280,121h1v1h-1zM289,118h1v3h-1zM288,117h1v1h-1zM288,121h1v1h-1zM297,118h1v3h-1zM296,117h1v1h-1zM296,121h1v1h-1zM305,118h1v3h-1zM304,117h1v1h-1zM304,121h1v1h-1zM313,118h1v3h-1zM312,117h1v1h-1zM312,121h1v1h-1zM321,118h1v3h-1zM320,117h1v1h-1zM320,121h1v1h-1zM329,118h1v3h-1zM328,117h1v1h-1zM328,121h1v1h-1zM337,118h1v3h-1zM336,117h1v1h-1zM336,121h1v1h-1zM345,118h1v3h-1zM344,117h1v1h-1zM344,121h1v1h-1zM353,118h1v3h-1zM352,117h1v1h-1zM352,121h1v1h-1zM361,118h1v3h-1zM360,117h1v1h-1zM360,121h1v1h-1zM369,118h1v3h-1zM368,117h1v1h-1zM368,121h1v1h-1zM377,118h1v3h-1zM376,117h1v1h-1zM376,121h1v1h-1zM385,118h1v3h-1zM384,117h1v1h-1zM384,121h1v1h-1zM393,118h1v3h-1zM392,117h1v1h-1zM392,121h1v1h-1zM401,118h1v3h-1zM400,117h1v1h-1zM400,121h1v1h-1zM409,118h1v3h-1zM408,117h1v1h-1zM408,121h1v1h-1zM417,118h1v3h-1zM416,117h1v1h-1zM416,121h1v1h-1zM425,118h1v3h-1zM424,117h1v1h-1zM424,121h1v1h-1zM433,118h1v3h-1zM432,117h1v1h-1zM432,121h1v1h-1zM441,118h1v3h-1zM440,117h1v1h-1zM440,121h1v1h-1zM449,118h1v3h-1zM448,117h1v1h-1zM448,121h1v1h-1zM457,118h1v3h-1zM456,117h1v1h-1zM456,121h1v1h-1zM465,118h1v3h-1zM464,117h1v1h-1zM464,121h1v1h-1zM473,118h1v3h-1zM472,117h1v1h-1zM472,121h1v1h-1zM481,118h1v3h-1zM480,117h1v1h-1zM480,121h1v1h-1zM489,118h1v3h-1zM488,117h1v1h-1zM488,121h1v1h-1zM497,118h1v3h-1zM496,117h1v1h-1zM496,121h1v1h-1zM505,118h1v3h-1zM504,117h1v1h-1zM504,121h1v1h-1zM513,118h1v3h-1zM512,117h1v1h-1zM512,121h1v1h-1zM521,118h1v3h-1zM520,117h1v1h-1zM520,121h1v1h-1zM529,118h1v3h-1zM528,117h1v1h-1zM528,121h1v1h-1zM537,118h1v3h-1zM536,117h1v1h-1zM536,121h1v1h-1zM545,118h1v3h-1zM544,117h1v1h-1zM544,121h1v1h-1zM553,118h1v3h-1zM552,117h1v1h-1zM552,121h1v1h-1zM561,118h1v3h-1zM560,117h1v1h-1zM560,121h1v1h-1zM569,118h1v3h-1zM568,117h1v1h-1zM568,121h1v1h-1zM577,118h1v3h-1zM576,117h1v1h-1zM576,121h1v1h-1zM585,118h1v3h-1zM584,117h1v1h-1zM584,121h1v1h-1zM593,118h1v3h-1zM592,117h1v1h-1zM592,121h1v1h-1zM601,118h1v3h-1zM600,117h1v1h-1zM600,121h1v1h-1zM609,118h1v3h-1zM608,117h1v1h-1zM608,121h1v1h-1zM617,118h1v3h-1zM616,117h1v1h-1zM616,121h1v1h-1zM625,118h1v3h-1zM624,117h1v1h-1zM624,121h1v1h-1zM633,118h1v3h-1zM632,117h1v1h-1zM632,121h1v1h-1zM641,118h1v3h-1zM640,117h1v1h-1zM640,121h1v1h-1zM649,118h1v3h-1zM648,117h1v1h-1zM648,121h1v1h-1zM657,118h1v3h-1zM656,117h1v1h-1zM656,121h1v1h-1zM665,118h1v3h-1zM664,117h1v1h-1zM664,121h1v1h-1zM673,118h1v3h-1zM672,117h1v1h-1zM672,121h1v1h-1zM681,118h1v3h-1zM680,117h1v1h-1zM680,121h1v1h-1zM689,118h1v3h-1zM688,117h1v1h-1zM688,121h1v1h-1zM697,118h1v3h-1zM696,117h1v1h-1zM696,121h1v1h-1zM705,118h1v3h-1zM704,117h1v1h-1zM704,121h1v1h-1zM713,118h1v3h-1zM712,117h1v1h-1zM712,121h1v1h-1zM721,118h1v3h-1zM720,117h1v1h-1zM720,121h1v1h-1zM729,118h1v3h-1zM728,117h1v1h-1zM728,121h1v1h-1zM737,118h1v3h-1zM736,117h1v1h-1zM736,121h1v1h-1zM745,118h1v3h-1zM744,117h1v1h-1zM744,121h1v1h-1zM753,118h1v3h-1zM752,117h1v1h-1zM752,121h1v1h-1zM761,118h1v3h-1zM760,117h1v1h-1zM760,121h1v1h-1zM769,118h1v3h-1zM768,117h1v1h-1zM768,121h1v1h-1zM777,118h1v3h-1zM776,117h1v1h-1zM776,121h1v1h-1zM785,118h1v3h-1zM784,117h1v1h-1zM784,121h1v1h-1zM793,118h1v3h-1zM792,117h1v1h-1zM792,121h1v1h-1zM801,118h1v3h-1zM800,117h1v1h-1zM800,121h1v1h-1zM809,118h1v3h-1zM808,117h1v1h-1zM808,121h1v1h-1zM817,118h1v3h-1zM816,117h1v1h-1zM816,121h1v1h-1zM825,118h1v3h-1zM824,117h1v1h-1zM824,121h1v1h-1zM833,118h1v3h-1zM832,117h1v1h-1zM832,121h1v1h-1zM841,118h1v3h-1zM840,117h1v1h-1zM840,121h1v1h-1zM849,118h1v3h-1zM848,117h1v1h-1zM848,121h1v1h-1zM857,118h1v3h-1zM856,117h1v1h-1zM856,121h1v1h-1zM865,118h1v3h-1zM864,117h1v1h-1zM864,121h1v1h-1zM873,118h1v3h-1zM872,117h1v1h-1zM872,121h1v1h-1zM881,118h1v3h-1zM880,117h1v1h-1zM880,121h1v1h-1zM889,118h1v3h-1zM888,117h1v1h-1zM888,121h1v1h-1zM897,118h1v3h-1zM896,117h1v1h-1zM896,121h1v1h-1zM905,118h1v3h-1zM904,117h1v1h-1zM904,121h1v1h-1zM913,118h1v3h-1zM912,117h1v1h-1zM912,121h1v1h-1zM921,118h1v3h-1zM920,117h1v1h-1zM920,121h1v1h-1zM929,118h1v3h-1zM928,117h1v1h-1zM928,121h1v1h-1zM937,118h1v3h-1zM936,117h1v1h-1zM936,121h1v1h-1zM945,118h1v3h-1zM944,117h1v1h-1zM944,121h1v1h-1z" fill="#1070b0"/>
<path d="M159,116h1v1h-1zM159,122h1v1h-1zM167,116h1v1h-1zM167,122h1v1h-1zM175,116h1v1h-1zM175,122h1v1h-1zM183,116h1v1h-1zM183,122h1v1h-1zM191,116h1v1h-1zM191,122h1v1h-1zM199,116h1v1h-1zM199,122h1v1h-1zM207,116h1v1h-1zM207,122h1v1h-1zM215,116h1v1h-1zM215,122h1v1h-1zM223,116h1v1h-1zM223,122h1v1h-1zM231,116h1v1h-1zM231,122h1v1h-1zM239,116h1v1h-1zM239,122h1v1h-1zM247,116h1v1h-1zM247,122h1v1h-1zM255,116h1v1h-1zM255,122h1v1h-1zM263,116h1v1h-1zM263,122h1v1h-1zM271,116h1v1h-1zM271,122h1v1h-1zM279,116h1v1h-1zM279,122h1v1h-1zM287,116h1v1h-1zM287,122h1v1h-1zM295,116h1v1h-1zM295,122h1v1h-1zM303,116h1v1h-1zM303,122h1v1h-1zM311,116h1v1h-1zM311,122h1v1h-1zM319,116h1v1h-1zM319,122h1v1h-1zM327,116h1v1h-1zM327,122h1v1h-1zM335,116h1v1h-1zM335,122h1v1h-1zM343,116h1v1h-1zM343,122h1v1h-1zM351,116h1v1h-1zM351,122h1v1h-1zM359,116h1v1h-1zM359,122h1v1h-1zM367,116h1v1h-1zM367,122h1v1h-1zM375,116h1v1h-1zM375,122h1v1h-1zM383,116h1v1h-1zM383,122h1v1h-1zM391,116h1v1h-1zM391,122h1v1h-1zM399,116h1v1h-1zM399,122h1v1h-1zM407,116h1v1h-1zM407,122h1v1h-1zM415,116h1v1h-1zM415,122h1v1h-1zM423,116h1v1h-1zM423,122h1v1h-1zM431,116h1v1h-1zM431,122h1v1h-1zM439,116h1v1h-1zM439,122h1v1h-1zM447,116h1v1h-1zM447,122h1v1h-1zM455,116h1v1h-1zM455,122h1v1h-1zM463,116h1v1h-1zM463,122h1v1h-1zM471,116h1v1h-1zM471,122h1v1h-1zM479,116h1v1h-1zM479,122h1v1h-1zM487,116h1v1h-1zM487,122h1v1h-1zM495,116h1v1h-1zM495,122h1v1h-1zM503,116h1v1h-1zM503,122h1v1h-1zM511,116h1v1h-1zM511,122h1v1h-1zM519,116h1v1h-1zM519,122h1v1h-1zM527,116h1v1h-1zM527,122h1v1h-1zM535,116h1v1h-1zM535,122h1v1h-1zM543,116h1v1h-1zM543,122h1v1h-1zM551,116h1v1h-1zM551,122h1v1h-1zM559,116h1v1h-1zM559,122h1v1h-1zM567,116h1v1h-1zM567,122h1v1h-1zM575,116h1v1h-1zM575,122h1v1h-1zM583,116h1v1h-1zM583,122h1v1h-1zM591,116h1v1h-1zM591,122h1v1h-1zM599,116h1v1h-1zM599,122h1v1h-1zM607,116h1v1h-1zM607,122h1v1h-1zM615,116h1v1h-1zM615,122h1v1h-1zM623,116h1v1h-1zM623,122h1v1h-1zM631,116h1v1h-1zM631,122h1v1h-1zM639,116h1v1h-1zM639,122h1v1h-1zM647,116h1v1h-1zM647,122h1v1h-1zM655,116h1v1h-1zM655,122h1v1h-1zM663,116h1v1h-1zM663,122h1v1h-1zM671,116h1v1h-1zM671,122h1v1h-1zM679,116h1v1h-1zM679,122h1v1h-1zM687,116h1v1h-1zM687,122h1v1h-1zM695,116h1v1h-1zM695,122h1v1h-1zM703,116h1v1h-1zM703,122h1v1h-1zM711,116h1v1h-1zM711,122h1v1h-1zM719,116h1v1h-1zM719,122h1v1h-1zM727,116h1v1h-1zM727,122h1v1h-1zM735,116h1v1h-1zM735,122h1v1h-1zM743,116h1v1h-1zM743,122h1v1h-1zM751,116h1v1h-1zM751,122h1v1h-1zM759,116h1v1h-1zM759,122h1v1h-1zM767,116h1v1h-1zM767,122h1v1h-1zM775,116h1v1h-1zM775,122h1v1h-1zM783,116h1v1h-1zM783,122h1v1h-1zM791,116h1v1h-1zM791,122h1v1h-1zM799,116h1v1h-1zM799,122h1v1h-1zM807,116h1v1h-1zM807,122h1v1h-1zM815,116h1v1h-1zM815,122h1v1h-1zM823,116h1v1h-1zM823,122h1v1h-1zM831,116h1v1h-1zM831,122h1v1h-1zM839,116h1v1h-1zM839,122h1v1h-1zM847,116h1v1h-1zM847,122h1v1h-1zM855,116h1v1h-1zM855,122h1v1h-1zM863,116h1v1h-1zM863,122h1v1h-1zM871,116h1v1h-1zM871,122h1v1h-1zM879,116h1v1h-1zM879,122h1v1h-1zM887,116h1v1h-1zM887,122h1v1h-1zM895,116h1v1h-1zM895,122h1v1h-1zM903,116h1v1h-1zM903,122h1v1h-1zM911,116h1v1h-1zM911,122h1v1h-1zM919,116h1v1h-1zM919,122h1v1h-1zM927,116h1v1h-1zM927,122h1v1h-1zM935,116h1v1h-1zM935,122h1v1h-1zM943,116h1v1h-1zM943,122h1v1h-1z" fill="#1070b0" opacity="0.45"/>
<text x="152" y="140" font-size="13" fill="#0c0c78" text-anchor="end" transform="matrix(1,0,0,1.08,0,-11.200)" >PGS1</text>
<rect x="157" y="134" width="792" height="3" fill="#fff"/>
<rect x="157" y="135" width="792" height="1" fill="#0c0c78"/>
<path d="M161,134h1v3h-1zM160,133h1v1h-1zM160,137h1v1h-1zM169,134h1v3h-1zM168,133h1v1h-1zM168,137h1v1h-1zM177,134h1v3h-1zM176,133h1v1h-1zM176,137h1v1h-1zM185,134h1v3h-1zM184,133h1v1h-1zM184,137h1v1h-1zM193,134h1v3h-1zM192,133h1v1h-1zM192,137h1v1h-1zM201,134h1v3h-1zM200,133h1v1h-1zM200,137h1v1h-1zM209,134h1v3h-1zM208,133h1v1h-1zM208,137h1v1h-1zM217,134h1v3h-1zM216,133h1v1h-1zM216,137h1v1h-1zM225,134h1v3h-1zM224,133h1v1h-1zM224,137h1v1h-1zM233,134h1v3h-1zM232,133h1v1h-1zM232,137h1v1h-1zM241,134h1v3h-1zM240,133h1v1h-1zM240,137h1v1h-1zM249,134h1v3h-1zM248,133h1v1h-1zM248,137h1v1h-1zM257,134h1v3h-1zM256,133h1v1h-1zM256,137h1v1h-1zM265,134h1v3h-1zM264,133h1v1h-1zM264,137h1v1h-1zM273,134h1v3h-1zM272,133h1v1h-1zM272,137h1v1h-1zM281,134h1v3h-1zM280,133h1v1h-1zM280,137h1v1h-1zM289,134h1v3h-1zM288,133h1v1h-1zM288,137h1v1h-1zM297,134h1v3h-1zM296,133h1v1h-1zM296,137h1v1h-1zM305,134h1v3h-1zM304,133h1v1h-1zM304,137h1v1h-1zM313,134h1v3h-1zM312,133h1v1h-1zM312,137h1v1h-1zM321,134h1v3h-1zM320,133h1v1h-1zM320,137h1v1h-1zM329,134h1v3h-1zM328,133h1v1h-1zM328,137h1v1h-1zM337,134h1v3h-1zM336,133h1v1h-1zM336,137h1v1h-1zM345,134h1v3h-1zM344,133h1v1h-1zM344,137h1v1h-1zM353,134h1v3h-1zM352,133h1v1h-1zM352,137h1v1h-1zM361,134h1v3h-1zM360,133h1v1h-1zM360,137h1v1h-1zM369,134h1v3h-1zM368,133h1v1h-1zM368,137h1v1h-1zM377,134h1v3h-1zM376,133h1v1h-1zM376,137h1v1h-1zM385,134h1v3h-1zM384,133h1v1h-1zM384,137h1v1h-1zM393,134h1v3h-1zM392,133h1v1h-1zM392,137h1v1h-1zM401,134h1v3h-1zM400,133h1v1h-1zM400,137h1v1h-1zM409,134h1v3h-1zM408,133h1v1h-1zM408,137h1v1h-1zM417,134h1v3h-1zM416,133h1v1h-1zM416,137h1v1h-1zM425,134h1v3h-1zM424,133h1v1h-1zM424,137h1v1h-1zM433,134h1v3h-1zM432,133h1v1h-1zM432,137h1v1h-1zM441,134h1v3h-1zM440,133h1v1h-1zM440,137h1v1h-1zM449,134h1v3h-1zM448,133h1v1h-1zM448,137h1v1h-1zM457,134h1v3h-1zM456,133h1v1h-1zM456,137h1v1h-1zM465,134h1v3h-1zM464,133h1v1h-1zM464,137h1v1h-1zM473,134h1v3h-1zM472,133h1v1h-1zM472,137h1v1h-1zM481,134h1v3h-1zM480,133h1v1h-1zM480,137h1v1h-1zM489,134h1v3h-1zM488,133h1v1h-1zM488,137h1v1h-1zM497,134h1v3h-1zM496,133h1v1h-1zM496,137h1v1h-1zM505,134h1v3h-1zM504,133h1v1h-1zM504,137h1v1h-1zM513,134h1v3h-1zM512,133h1v1h-1zM512,137h1v1h-1zM521,134h1v3h-1zM520,133h1v1h-1zM520,137h1v1h-1zM529,134h1v3h-1zM528,133h1v1h-1zM528,137h1v1h-1zM537,134h1v3h-1zM536,133h1v1h-1zM536,137h1v1h-1zM545,134h1v3h-1zM544,133h1v1h-1zM544,137h1v1h-1zM553,134h1v3h-1zM552,133h1v1h-1zM552,137h1v1h-1zM561,134h1v3h-1zM560,133h1v1h-1zM560,137h1v1h-1zM569,134h1v3h-1zM568,133h1v1h-1zM568,137h1v1h-1zM577,134h1v3h-1zM576,133h1v1h-1zM576,137h1v1h-1zM585,134h1v3h-1zM584,133h1v1h-1zM584,137h1v1h-1zM593,134h1v3h-1zM592,133h1v1h-1zM592,137h1v1h-1zM601,134h1v3h-1zM600,133h1v1h-1zM600,137h1v1h-1zM609,134h1v3h-1zM608,133h1v1h-1zM608,137h1v1h-1zM617,134h1v3h-1zM616,133h1v1h-1zM616,137h1v1h-1zM625,134h1v3h-1zM624,133h1v1h-1zM624,137h1v1h-1zM633,134h1v3h-1zM632,133h1v1h-1zM632,137h1v1h-1zM641,134h1v3h-1zM640,133h1v1h-1zM640,137h1v1h-1zM649,134h1v3h-1zM648,133h1v1h-1zM648,137h1v1h-1zM657,134h1v3h-1zM656,133h1v1h-1zM656,137h1v1h-1zM665,134h1v3h-1zM664,133h1v1h-1zM664,137h1v1h-1zM673,134h1v3h-1zM672,133h1v1h-1zM672,137h1v1h-1zM681,134h1v3h-1zM680,133h1v1h-1zM680,137h1v1h-1zM689,134h1v3h-1zM688,133h1v1h-1zM688,137h1v1h-1zM697,134h1v3h-1zM696,133h1v1h-1zM696,137h1v1h-1zM705,134h1v3h-1zM704,133h1v1h-1zM704,137h1v1h-1zM713,134h1v3h-1zM712,133h1v1h-1zM712,137h1v1h-1zM721,134h1v3h-1zM720,133h1v1h-1zM720,137h1v1h-1zM729,134h1v3h-1zM728,133h1v1h-1zM728,137h1v1h-1zM737,134h1v3h-1zM736,133h1v1h-1zM736,137h1v1h-1zM745,134h1v3h-1zM744,133h1v1h-1zM744,137h1v1h-1zM753,134h1v3h-1zM752,133h1v1h-1zM752,137h1v1h-1zM761,134h1v3h-1zM760,133h1v1h-1zM760,137h1v1h-1zM769,134h1v3h-1zM768,133h1v1h-1zM768,137h1v1h-1zM777,134h1v3h-1zM776,133h1v1h-1zM776,137h1v1h-1zM785,134h1v3h-1zM784,133h1v1h-1zM784,137h1v1h-1zM793,134h1v3h-1zM792,133h1v1h-1zM792,137h1v1h-1zM801,134h1v3h-1zM800,133h1v1h-1zM800,137h1v1h-1zM809,134h1v3h-1zM808,133h1v1h-1zM808,137h1v1h-1zM817,134h1v3h-1zM816,133h1v1h-1zM816,137h1v1h-1zM825,134h1v3h-1zM824,133h1v1h-1zM824,137h1v1h-1zM833,134h1v3h-1zM832,133h1v1h-1zM832,137h1v1h-1zM841,134h1v3h-1zM840,133h1v1h-1zM840,137h1v1h-1zM849,134h1v3h-1zM848,133h1v1h-1zM848,137h1v1h-1zM857,134h1v3h-1zM856,133h1v1h-1zM856,137h1v1h-1zM865,134h1v3h-1zM864,133h1v1h-1zM864,137h1v1h-1zM873,134h1v3h-1zM872,133h1v1h-1zM872,137h1v1h-1zM881,134h1v3h-1zM880,133h1v1h-1zM880,137h1v1h-1zM889,134h1v3h-1zM888,133h1v1h-1zM888,137h1v1h-1zM897,134h1v3h-1zM896,133h1v1h-1zM896,137h1v1h-1zM905,134h1v3h-1zM904,133h1v1h-1zM904,137h1v1h-1zM913,134h1v3h-1zM912,133h1v1h-1zM912,137h1v1h-1zM921,134h1v3h-1zM920,133h1v1h-1zM920,137h1v1h-1zM929,134h1v3h-1zM928,133h1v1h-1zM928,137h1v1h-1zM937,134h1v3h-1zM936,133h1v1h-1zM936,137h1v1h-1zM945,134h1v3h-1zM944,133h1v1h-1zM944,137h1v1h-1z" fill="#0c0c78"/>
<path d="M159,132h1v1h-1zM159,138h1v1h-1zM167,132h1v1h-1zM167,138h1v1h-1zM175,132h1v1h-1zM175,138h1v1h-1zM183,132h1v1h-1zM183,138h1v1h-1zM191,132h1v1h-1zM191,138h1v1h-1zM199,132h1v1h-1zM199,138h1v1h-1zM207,132h1v1h-1zM207,138h1v1h-1zM215,132h1v1h-1zM215,138h1v1h-1zM223,132h1v1h-1zM223,138h1v1h-1zM231,132h1v1h-1zM231,138h1v1h-1zM239,132h1v1h-1zM239,138h1v1h-1zM247,132h1v1h-1zM247,138h1v1h-1zM255,132h1v1h-1zM255,138h1v1h-1zM263,132h1v1h-1zM263,138h1v1h-1zM271,132h1v1h-1zM271,138h1v1h-1zM279,132h1v1h-1zM279,138h1v1h-1zM287,132h1v1h-1zM287,138h1v1h-1zM295,132h1v1h-1zM295,138h1v1h-1zM303,132h1v1h-1zM303,138h1v1h-1zM311,132h1v1h-1zM311,138h1v1h-1zM319,132h1v1h-1zM319,138h1v1h-1zM327,132h1v1h-1zM327,138h1v1h-1zM335,132h1v1h-1zM335,138h1v1h-1zM343,132h1v1h-1zM343,138h1v1h-1zM351,132h1v1h-1zM351,138h1v1h-1zM359,132h1v1h-1zM359,138h1v1h-1zM367,132h1v1h-1zM367,138h1v1h-1zM375,132h1v1h-1zM375,138h1v1h-1zM383,132h1v1h-1zM383,138h1v1h-1zM391,132h1v1h-1zM391,138h1v1h-1zM399,132h1v1h-1zM399,138h1v1h-1zM407,132h1v1h-1zM407,138h1v1h-1zM415,132h1v1h-1zM415,138h1v1h-1zM423,132h1v1h-1zM423,138h1v1h-1zM431,132h1v1h-1zM431,138h1v1h-1zM439,132h1v1h-1zM439,138h1v1h-1zM447,132h1v1h-1zM447,138h1v1h-1zM455,132h1v1h-1zM455,138h1v1h-1zM463,132h1v1h-1zM463,138h1v1h-1zM471,132h1v1h-1zM471,138h1v1h-1zM479,132h1v1h-1zM479,138h1v1h-1zM487,132h1v1h-1zM487,138h1v1h-1zM495,132h1v1h-1zM495,138h1v1h-1zM503,132h1v1h-1zM503,138h1v1h-1zM511,132h1v1h-1zM511,138h1v1h-1zM519,132h1v1h-1zM519,138h1v1h-1zM527,132h1v1h-1zM527,138h1v1h-1zM535,132h1v1h-1zM535,138h1v1h-1zM543,132h1v1h-1zM543,138h1v1h-1zM551,132h1v1h-1zM551,138h1v1h-1zM559,132h1v1h-1zM559,138h1v1h-1zM567,132h1v1h-1zM567,138h1v1h-1zM575,132h1v1h-1zM575,138h1v1h-1zM583,132h1v1h-1zM583,138h1v1h-1zM591,132h1v1h-1zM591,138h1v1h-1zM599,132h1v1h-1zM599,138h1v1h-1zM607,132h1v1h-1zM607,138h1v1h-1zM615,132h1v1h-1zM615,138h1v1h-1zM623,132h1v1h-1zM623,138h1v1h-1zM631,132h1v1h-1zM631,138h1v1h-1zM639,132h1v1h-1zM639,138h1v1h-1zM647,132h1v1h-1zM647,138h1v1h-1zM655,132h1v1h-1zM655,138h1v1h-1zM663,132h1v1h-1zM663,138h1v1h-1zM671,132h1v1h-1zM671,138h1v1h-1zM679,132h1v1h-1zM679,138h1v1h-1zM687,132h1v1h-1zM687,138h1v1h-1zM695,132h1v1h-1zM695,138h1v1h-1zM703,132h1v1h-1zM703,138h1v1h-1zM711,132h1v1h-1zM711,138h1v1h-1zM719,132h1v1h-1zM719,138h1v1h-1zM727,132h1v1h-1zM727,138h1v1h-1zM735,132h1v1h-1zM735,138h1v1h-1zM743,132h1v1h-1zM743,138h1v1h-1zM751,132h1v1h-1zM751,138h1v1h-1zM759,132h1v1h-1zM759,138h1v1h-1zM767,132h1v1h-1zM767,138h1v1h-1zM775,132h1v1h-1zM775,138h1v1h-1zM783,132h1v1h-1zM783,138h1v1h-1zM791,132h1v1h-1zM791,138h1v1h-1zM799,132h1v1h-1zM799,138h1v1h-1zM807,132h1v1h-1zM807,138h1v1h-1zM815,132h1v1h-1zM815,138h1v1h-1zM823,132h1v1h-1zM823,138h1v1h-1zM831,132h1v1h-1zM831,138h1v1h-1zM839,132h1v1h-1zM839,138h1v1h-1zM847,132h1v1h-1zM847,138h1v1h-1zM855,132h1v1h-1zM855,138h1v1h-1zM863,132h1v1h-1zM863,138h1v1h-1zM871,132h1v1h-1zM871,138h1v1h-1zM879,132h1v1h-1zM879,138h1v1h-1zM887,132h1v1h-1zM887,138h1v1h-1zM895,132h1v1h-1zM895,138h1v1h-1zM903,132h1v1h-1zM903,138h1v1h-1zM911,132h1v1h-1zM911,138h1v1h-1zM919,132h1v1h-1zM919,138h1v1h-1zM927,132h1v1h-1zM927,138h1v1h-1zM935,132h1v1h-1zM935,138h1v1h-1zM943,132h1v1h-1zM943,138h1v1h-1z" fill="#0c0c78" opacity="0.45"/>
<text x="152" y="156" font-size="13" fill="#0c0c78" text-anchor="end" transform="matrix(1,0,0,1.08,0,-12.480)" >PGS1</text>
<rect x="157" y="150" width="792" height="3" fill="#fff"/>
<rect x="157" y="151" width="792" height="1" fill="#0c0c78"/>
<path d="M161,150h1v3h-1zM160,149h1v1h-1zM160,153h1v1h-1zM169,150h1v3h-1zM168,149h1v1h-1zM168,153h1v1h-1zM177,150h1v3h-1zM176,149h1v1h-1zM176,153h1v1h-1zM185,150h1v3h-1zM184,149h1v1h-1zM184,153h1v1h-1zM193,150h1v3h-1zM192,149h1v1h-1zM192,153h1v1h-1zM201,150h1v3h-1zM200,149h1v1h-1zM200,153h1v1h-1zM209,150h1v3h-1zM208,149h1v1h-1zM208,153h1v1h-1zM217,150h1v3h-1zM216,149h1v1h-1zM216,153h1v1h-1zM225,150h1v3h-1zM224,149h1v1h-1zM224,153h1v1h-1zM233,150h1v3h-1zM232,149h1v1h-1zM232,153h1v1h-1zM241,150h1v3h-1zM240,149h1v1h-1zM240,153h1v1h-1zM249,150h1v3h-1zM248,149h1v1h-1zM248,153h1v1h-1zM257,150h1v3h-1zM256,149h1v1h-1zM256,153h1v1h-1zM265,150h1v3h-1zM264,149h1v1h-1zM264,153h1v1h-1zM273,150h1v3h-1zM272,149h1v1h-1zM272,153h1v1h-1zM281,150h1v3h-1zM280,149h1v1h-1zM280,153h1v1h-1zM289,150h1v3h-1zM288,149h1v1h-1zM288,153h1v1h-1zM297,150h1v3h-1zM296,149h1v1h-1zM296,153h1v1h-1zM305,150h1v3h-1zM304,149h1v1h-1zM304,153h1v1h-1zM313,150h1v3h-1zM312,149h1v1h-1zM312,153h1v1h-1zM321,150h1v3h-1zM320,149h1v1h-1zM320,153h1v1h-1zM329,150h1v3h-1zM328,149h1v1h-1zM328,153h1v1h-1zM337,150h1v3h-1zM336,149h1v1h-1zM336,153h1v1h-1zM345,150h1v3h-1zM344,149h1v1h-1zM344,153h1v1h-1zM353,150h1v3h-1zM352,149h1v1h-1zM352,153h1v1h-1zM361,150h1v3h-1zM360,149h1v1h-1zM360,153h1v1h-1zM369,150h1v3h-1zM368,149h1v1h-1zM368,153h1v1h-1zM377,150h1v3h-1zM376,149h1v1h-1zM376,153h1v1h-1zM385,150h1v3h-1zM384,149h1v1h-1zM384,153h1v1h-1zM393,150h1v3h-1zM392,149h1v1h-1zM392,153h1v1h-1zM401,150h1v3h-1zM400,149h1v1h-1zM400,153h1v1h-1zM409,150h1v3h-1zM408,149h1v1h-1zM408,153h1v1h-1zM417,150h1v3h-1zM416,149h1v1h-1zM416,153h1v1h-1zM425,150h1v3h-1zM424,149h1v1h-1zM424,153h1v1h-1zM433,150h1v3h-1zM432,149h1v1h-1zM432,153h1v1h-1zM441,150h1v3h-1zM440,149h1v1h-1zM440,153h1v1h-1zM449,150h1v3h-1zM448,149h1v1h-1zM448,153h1v1h-1zM457,150h1v3h-1zM456,149h1v1h-1zM456,153h1v1h-1zM465,150h1v3h-1zM464,149h1v1h-1zM464,153h1v1h-1zM473,150h1v3h-1zM472,149h1v1h-1zM472,153h1v1h-1zM481,150h1v3h-1zM480,149h1v1h-1zM480,153h1v1h-1zM489,150h1v3h-1zM488,149h1v1h-1zM488,153h1v1h-1zM497,150h1v3h-1zM496,149h1v1h-1zM496,153h1v1h-1zM505,150h1v3h-1zM504,149h1v1h-1zM504,153h1v1h-1zM513,150h1v3h-1zM512,149h1v1h-1zM512,153h1v1h-1zM521,150h1v3h-1zM520,149h1v1h-1zM520,153h1v1h-1zM529,150h1v3h-1zM528,149h1v1h-1zM528,153h1v1h-1zM537,150h1v3h-1zM536,149h1v1h-1zM536,153h1v1h-1zM545,150h1v3h-1zM544,149h1v1h-1zM544,153h1v1h-1zM553,150h1v3h-1zM552,149h1v1h-1zM552,153h1v1h-1zM561,150h1v3h-1zM560,149h1v1h-1zM560,153h1v1h-1zM569,150h1v3h-1zM568,149h1v1h-1zM568,153h1v1h-1zM577,150h1v3h-1zM576,149h1v1h-1zM576,153h1v1h-1zM585,150h1v3h-1zM584,149h1v1h-1zM584,153h1v1h-1zM593,150h1v3h-1zM592,149h1v1h-1zM592,153h1v1h-1zM601,150h1v3h-1zM600,149h1v1h-1zM600,153h1v1h-1zM609,150h1v3h-1zM608,149h1v1h-1zM608,153h1v1h-1zM617,150h1v3h-1zM616,149h1v1h-1zM616,153h1v1h-1zM625,150h1v3h-1zM624,149h1v1h-1zM624,153h1v1h-1zM633,150h1v3h-1zM632,149h1v1h-1zM632,153h1v1h-1zM641,150h1v3h-1zM640,149h1v1h-1zM640,153h1v1h-1zM649,150h1v3h-1zM648,149h1v1h-1zM648,153h1v1h-1zM657,150h1v3h-1zM656,149h1v1h-1zM656,153h1v1h-1zM665,150h1v3h-1zM664,149h1v1h-1zM664,153h1v1h-1zM673,150h1v3h-1zM672,149h1v1h-1zM672,153h1v1h-1zM681,150h1v3h-1zM680,149h1v1h-1zM680,153h1v1h-1zM689,150h1v3h-1zM688,149h1v1h-1zM688,153h1v1h-1zM697,150h1v3h-1zM696,149h1v1h-1zM696,153h1v1h-1zM705,150h1v3h-1zM704,149h1v1h-1zM704,153h1v1h-1zM713,150h1v3h-1zM712,149h1v1h-1zM712,153h1v1h-1zM721,150h1v3h-1zM720,149h1v1h-1zM720,153h1v1h-1zM729,150h1v3h-1zM728,149h1v1h-1zM728,153h1v1h-1zM737,150h1v3h-1zM736,149h1v1h-1zM736,153h1v1h-1zM745,150h1v3h-1zM744,149h1v1h-1zM744,153h1v1h-1zM753,150h1v3h-1zM752,149h1v1h-1zM752,153h1v1h-1zM761,150h1v3h-1zM760,149h1v1h-1zM760,153h1v1h-1zM769,150h1v3h-1zM768,149h1v1h-1zM768,153h1v1h-1zM777,150h1v3h-1zM776,149h1v1h-1zM776,153h1v1h-1zM785,150h1v3h-1zM784,149h1v1h-1zM784,153h1v1h-1zM793,150h1v3h-1zM792,149h1v1h-1zM792,153h1v1h-1zM801,150h1v3h-1zM800,149h1v1h-1zM800,153h1v1h-1zM809,150h1v3h-1zM808,149h1v1h-1zM808,153h1v1h-1zM817,150h1v3h-1zM816,149h1v1h-1zM816,153h1v1h-1zM825,150h1v3h-1zM824,149h1v1h-1zM824,153h1v1h-1zM833,150h1v3h-1zM832,149h1v1h-1zM832,153h1v1h-1zM841,150h1v3h-1zM840,149h1v1h-1zM840,153h1v1h-1zM849,150h1v3h-1zM848,149h1v1h-1zM848,153h1v1h-1zM857,150h1v3h-1zM856,149h1v1h-1zM856,153h1v1h-1zM865,150h1v3h-1zM864,149h1v1h-1zM864,153h1v1h-1zM873,150h1v3h-1zM872,149h1v1h-1zM872,153h1v1h-1zM881,150h1v3h-1zM880,149h1v1h-1zM880,153h1v1h-1zM889,150h1v3h-1zM888,149h1v1h-1zM888,153h1v1h-1zM897,150h1v3h-1zM896,149h1v1h-1zM896,153h1v1h-1zM905,150h1v3h-1zM904,149h1v1h-1zM904,153h1v1h-1zM913,150h1v3h-1zM912,149h1v1h-1zM912,153h1v1h-1zM921,150h1v3h-1zM920,149h1v1h-1zM920,153h1v1h-1zM929,150h1v3h-1zM928,149h1v1h-1zM928,153h1v1h-1zM937,150h1v3h-1zM936,149h1v1h-1zM936,153h1v1h-1zM945,150h1v3h-1zM944,149h1v1h-1zM944,153h1v1h-1z" fill="#0c0c78"/>
<path d="M159,148h1v1h-1zM159,154h1v1h-1zM167,148h1v1h-1zM167,154h1v1h-1zM175,148h1v1h-1zM175,154h1v1h-1zM183,148h1v1h-1zM183,154h1v1h-1zM191,148h1v1h-1zM191,154h1v1h-1zM199,148h1v1h-1zM199,154h1v1h-1zM207,148h1v1h-1zM207,154h1v1h-1zM215,148h1v1h-1zM215,154h1v1h-1zM223,148h1v1h-1zM223,154h1v1h-1zM231,148h1v1h-1zM231,154h1v1h-1zM239,148h1v1h-1zM239,154h1v1h-1zM247,148h1v1h-1zM247,154h1v1h-1zM255,148h1v1h-1zM255,154h1v1h-1zM263,148h1v1h-1zM263,154h1v1h-1zM271,148h1v1h-1zM271,154h1v1h-1zM279,148h1v1h-1zM279,154h1v1h-1zM287,148h1v1h-1zM287,154h1v1h-1zM295,148h1v1h-1zM295,154h1v1h-1zM303,148h1v1h-1zM303,154h1v1h-1zM311,148h1v1h-1zM311,154h1v1h-1zM319,148h1v1h-1zM319,154h1v1h-1zM327,148h1v1h-1zM327,154h1v1h-1zM335,148h1v1h-1zM335,154h1v1h-1zM343,148h1v1h-1zM343,154h1v1h-1zM351,148h1v1h-1zM351,154h1v1h-1zM359,148h1v1h-1zM359,154h1v1h-1zM367,148h1v1h-1zM367,154h1v1h-1zM375,148h1v1h-1zM375,154h1v1h-1zM383,148h1v1h-1zM383,154h1v1h-1zM391,148h1v1h-1zM391,154h1v1h-1zM399,148h1v1h-1zM399,154h1v1h-1zM407,148h1v1h-1zM407,154h1v1h-1zM415,148h1v1h-1zM415,154h1v1h-1zM423,148h1v1h-1zM423,154h1v1h-1zM431,148h1v1h-1zM431,154h1v1h-1zM439,148h1v1h-1zM439,154h1v1h-1zM447,148h1v1h-1zM447,154h1v1h-1zM455,148h1v1h-1zM455,154h1v1h-1zM463,148h1v1h-1zM463,154h1v1h-1zM471,148h1v1h-1zM471,154h1v1h-1zM479,148h1v1h-1zM479,154h1v1h-1zM487,148h1v1h-1zM487,154h1v1h-1zM495,148h1v1h-1zM495,154h1v1h-1zM503,148h1v1h-1zM503,154h1v1h-1zM511,148h1v1h-1zM511,154h1v1h-1zM519,148h1v1h-1zM519,154h1v1h-1zM527,148h1v1h-1zM527,154h1v1h-1zM535,148h1v1h-1zM535,154h1v1h-1zM543,148h1v1h-1zM543,154h1v1h-1zM551,148h1v1h-1zM551,154h1v1h-1zM559,148h1v1h-1zM559,154h1v1h-1zM567,148h1v1h-1zM567,154h1v1h-1zM575,148h1v1h-1zM575,154h1v1h-1zM583,148h1v1h-1zM583,154h1v1h-1zM591,148h1v1h-1zM591,154h1v1h-1zM599,148h1v1h-1zM599,154h1v1h-1zM607,148h1v1h-1zM607,154h1v1h-1zM615,148h1v1h-1zM615,154h1v1h-1zM623,148h1v1h-1zM623,154h1v1h-1zM631,148h1v1h-1zM631,154h1v1h-1zM639,148h1v1h-1zM639,154h1v1h-1zM647,148h1v1h-1zM647,154h1v1h-1zM655,148h1v1h-1zM655,154h1v1h-1zM663,148h1v1h-1zM663,154h1v1h-1zM671,148h1v1h-1zM671,154h1v1h-1zM679,148h1v1h-1zM679,154h1v1h-1zM687,148h1v1h-1zM687,154h1v1h-1zM695,148h1v1h-1zM695,154h1v1h-1zM703,148h1v1h-1zM703,154h1v1h-1zM711,148h1v1h-1zM711,154h1v1h-1zM719,148h1v1h-1zM719,154h1v1h-1zM727,148h1v1h-1zM727,154h1v1h-1zM735,148h1v1h-1zM735,154h1v1h-1zM743,148h1v1h-1zM743,154h1v1h-1zM751,148h1v1h-1zM751,154h1v1h-1zM759,148h1v1h-1zM759,154h1v1h-1zM767,148h1v1h-1zM767,154h1v1h-1zM775,148h1v1h-1zM775,154h1v1h-1zM783,148h1v1h-1zM783,154h1v1h-1zM791,148h1v1h-1zM791,154h1v1h-1zM799,148h1v1h-1zM799,154h1v1h-1zM807,148h1v1h-1zM807,154h1v1h-1zM815,148h1v1h-1zM815,154h1v1h-1zM823,148h1v1h-1zM823,154h1v1h-1zM831,148h1v1h-1zM831,154h1v1h-1zM839,148h1v1h-1zM839,154h1v1h-1zM847,148h1v1h-1zM847,154h1v1h-1zM855,148h1v1h-1zM855,154h1v1h-1zM863,148h1v1h-1zM863,154h1v1h-1zM871,148h1v1h-1zM871,154h1v1h-1zM879,148h1v1h-1zM879,154h1v1h-1zM887,148h1v1h-1zM887,154h1v1h-1zM895,148h1v1h-1zM895,154h1v1h-1zM903,148h1v1h-1zM903,154h1v1h-1zM911,148h1v1h-1zM911,154h1v1h-1zM919,148h1v1h-1zM919,154h1v1h-1zM927,148h1v1h-1zM927,154h1v1h-1zM935,148h1v1h-1zM935,154h1v1h-1zM943,148h1v1h-1zM943,154h1v1h-1z" fill="#0c0c78" opacity="0.45"/>
<text x="152" y="172" font-size="13" fill="#0c0c78" text-anchor="end" transform="matrix(1,0,0,1.08,0,-13.760)" >PGS1</text>
<rect x="157" y="166" width="792" height="3" fill="#fff"/>
<rect x="157" y="167" width="792" height="1" fill="#0c0c78"/>
<path d="M161,166h1v3h-1zM160,165h1v1h-1zM160,169h1v1h-1zM169,166h1v3h-1zM168,165h1v1h-1zM168,169h1v1h-1zM177,166h1v3h-1zM176,165h1v1h-1zM176,169h1v1h-1zM185,166h1v3h-1zM184,165h1v1h-1zM184,169h1v1h-1zM193,166h1v3h-1zM192,165h1v1h-1zM192,169h1v1h-1zM201,166h1v3h-1zM200,165h1v1h-1zM200,169h1v1h-1zM209,166h1v3h-1zM208,165h1v1h-1zM208,169h1v1h-1zM217,166h1v3h-1zM216,165h1v1h-1zM216,169h1v1h-1zM225,166h1v3h-1zM224,165h1v1h-1zM224,169h1v1h-1zM233,166h1v3h-1zM232,165h1v1h-1zM232,169h1v1h-1zM241,166h1v3h-1zM240,165h1v1h-1zM240,169h1v1h-1zM249,166h1v3h-1zM248,165h1v1h-1zM248,169h1v1h-1zM257,166h1v3h-1zM256,165h1v1h-1zM256,169h1v1h-1zM265,166h1v3h-1zM264,165h1v1h-1zM264,169h1v1h-1zM273,166h1v3h-1zM272,165h1v1h-1zM272,169h1v1h-1zM281,166h1v3h-1zM280,165h1v1h-1zM280,169h1v1h-1zM289,166h1v3h-1zM288,165h1v1h-1zM288,169h1v1h-1zM297,166h1v3h-1zM296,165h1v1h-1zM296,169h1v1h-1zM305,166h1v3h-1zM304,165h1v1h-1zM304,169h1v1h-1zM313,166h1v3h-1zM312,165h1v1h-1zM312,169h1v1h-1zM321,166h1v3h-1zM320,165h1v1h-1zM320,169h1v1h-1zM329,166h1v3h-1zM328,165h1v1h-1zM328,169h1v1h-1zM337,166h1v3h-1zM336,165h1v1h-1zM336,169h1v1h-1zM345,166h1v3h-1zM344,165h1v1h-1zM344,169h1v1h-1zM353,166h1v3h-1zM352,165h1v1h-1zM352,169h1v1h-1zM361,166h1v3h-1zM360,165h1v1h-1zM360,169h1v1h-1zM369,166h1v3h-1zM368,165h1v1h-1zM368,169h1v1h-1zM377,166h1v3h-1zM376,165h1v1h-1zM376,169h1v1h-1zM385,166h1v3h-1zM384,165h1v1h-1zM384,169h1v1h-1zM393,166h1v3h-1zM392,165h1v1h-1zM392,169h1v1h-1zM401,166h1v3h-1zM400,165h1v1h-1zM400,169h1v1h-1zM409,166h1v3h-1zM408,165h1v1h-1zM408,169h1v1h-1zM417,166h1v3h-1zM416,165h1v1h-1zM416,169h1v1h-1zM425,166h1v3h-1zM424,165h1v1h-1zM424,169h1v1h-1zM433,166h1v3h-1zM432,165h1v1h-1zM432,169h1v1h-1zM441,166h1v3h-1zM440,165h1v1h-1zM440,169h1v1h-1zM449,166h1v3h-1zM448,165h1v1h-1zM448,169h1v1h-1zM457,166h1v3h-1zM456,165h1v1h-1zM456,169h1v1h-1zM465,166h1v3h-1zM464,165h1v1h-1zM464,169h1v1h-1zM473,166h1v3h-1zM472,165h1v1h-1zM472,169h1v1h-1zM481,166h1v3h-1zM480,165h1v1h-1zM480,169h1v1h-1zM489,166h1v3h-1zM488,165h1v1h-1zM488,169h1v1h-1zM497,166h1v3h-1zM496,165h1v1h-1zM496,169h1v1h-1zM505,166h1v3h-1zM504,165h1v1h-1zM504,169h1v1h-1zM513,166h1v3h-1zM512,165h1v1h-1zM512,169h1v1h-1zM521,166h1v3h-1zM520,165h1v1h-1zM520,169h1v1h-1zM529,166h1v3h-1zM528,165h1v1h-1zM528,169h1v1h-1zM537,166h1v3h-1zM536,165h1v1h-1zM536,169h1v1h-1zM545,166h1v3h-1zM544,165h1v1h-1zM544,169h1v1h-1zM553,166h1v3h-1zM552,165h1v1h-1zM552,169h1v1h-1zM561,166h1v3h-1zM560,165h1v1h-1zM560,169h1v1h-1zM569,166h1v3h-1zM568,165h1v1h-1zM568,169h1v1h-1zM577,166h1v3h-1zM576,165h1v1h-1zM576,169h1v1h-1zM585,166h1v3h-1zM584,165h1v1h-1zM584,169h1v1h-1zM593,166h1v3h-1zM592,165h1v1h-1zM592,169h1v1h-1zM601,166h1v3h-1zM600,165h1v1h-1zM600,169h1v1h-1zM609,166h1v3h-1zM608,165h1v1h-1zM608,169h1v1h-1zM617,166h1v3h-1zM616,165h1v1h-1zM616,169h1v1h-1zM625,166h1v3h-1zM624,165h1v1h-1zM624,169h1v1h-1zM633,166h1v3h-1zM632,165h1v1h-1zM632,169h1v1h-1zM641,166h1v3h-1zM640,165h1v1h-1zM640,169h1v1h-1zM649,166h1v3h-1zM648,165h1v1h-1zM648,169h1v1h-1zM657,166h1v3h-1zM656,165h1v1h-1zM656,169h1v1h-1zM665,166h1v3h-1zM664,165h1v1h-1zM664,169h1v1h-1zM673,166h1v3h-1zM672,165h1v1h-1zM672,169h1v1h-1zM681,166h1v3h-1zM680,165h1v1h-1zM680,169h1v1h-1zM689,166h1v3h-1zM688,165h1v1h-1zM688,169h1v1h-1zM697,166h1v3h-1zM696,165h1v1h-1zM696,169h1v1h-1zM705,166h1v3h-1zM704,165h1v1h-1zM704,169h1v1h-1zM713,166h1v3h-1zM712,165h1v1h-1zM712,169h1v1h-1zM721,166h1v3h-1zM720,165h1v1h-1zM720,169h1v1h-1zM729,166h1v3h-1zM728,165h1v1h-1zM728,169h1v1h-1zM737,166h1v3h-1zM736,165h1v1h-1zM736,169h1v1h-1zM745,166h1v3h-1zM744,165h1v1h-1zM744,169h1v1h-1zM753,166h1v3h-1zM752,165h1v1h-1zM752,169h1v1h-1zM761,166h1v3h-1zM760,165h1v1h-1zM760,169h1v1h-1zM769,166h1v3h-1zM768,165h1v1h-1zM768,169h1v1h-1zM777,166h1v3h-1zM776,165h1v1h-1zM776,169h1v1h-1zM785,166h1v3h-1zM784,165h1v1h-1zM784,169h1v1h-1zM793,166h1v3h-1zM792,165h1v1h-1zM792,169h1v1h-1zM801,166h1v3h-1zM800,165h1v1h-1zM800,169h1v1h-1zM809,166h1v3h-1zM808,165h1v1h-1zM808,169h1v1h-1zM817,166h1v3h-1zM816,165h1v1h-1zM816,169h1v1h-1zM825,166h1v3h-1zM824,165h1v1h-1zM824,169h1v1h-1zM833,166h1v3h-1zM832,165h1v1h-1zM832,169h1v1h-1zM841,166h1v3h-1zM840,165h1v1h-1zM840,169h1v1h-1zM849,166h1v3h-1zM848,165h1v1h-1zM848,169h1v1h-1zM857,166h1v3h-1zM856,165h1v1h-1zM856,169h1v1h-1zM865,166h1v3h-1zM864,165h1v1h-1zM864,169h1v1h-1zM873,166h1v3h-1zM872,165h1v1h-1zM872,169h1v1h-1zM881,166h1v3h-1zM880,165h1v1h-1zM880,169h1v1h-1zM889,166h1v3h-1zM888,165h1v1h-1zM888,169h1v1h-1zM897,166h1v3h-1zM896,165h1v1h-1zM896,169h1v1h-1zM905,166h1v3h-1zM904,165h1v1h-1zM904,169h1v1h-1zM913,166h1v3h-1zM912,165h1v1h-1zM912,169h1v1h-1zM921,166h1v3h-1zM920,165h1v1h-1zM920,169h1v1h-1zM929,166h1v3h-1zM928,165h1v1h-1zM928,169h1v1h-1zM937,166h1v3h-1zM936,165h1v1h-1zM936,169h1v1h-1zM945,166h1v3h-1zM944,165h1v1h-1zM944,169h1v1h-1z" fill="#0c0c78"/>
<path d="M159,164h1v1h-1zM159,170h1v1h-1zM167,164h1v1h-1zM167,170h1v1h-1zM175,164h1v1h-1zM175,170h1v1h-1zM183,164h1v1h-1zM183,170h1v1h-1zM191,164h1v1h-1zM191,170h1v1h-1zM199,164h1v1h-1zM199,170h1v1h-1zM207,164h1v1h-1zM207,170h1v1h-1zM215,164h1v1h-1zM215,170h1v1h-1zM223,164h1v1h-1zM223,170h1v1h-1zM231,164h1v1h-1zM231,170h1v1h-1zM239,164h1v1h-1zM239,170h1v1h-1zM247,164h1v1h-1zM247,170h1v1h-1zM255,164h1v1h-1zM255,170h1v1h-1zM263,164h1v1h-1zM263,170h1v1h-1zM271,164h1v1h-1zM271,170h1v1h-1zM279,164h1v1h-1zM279,170h1v1h-1zM287,164h1v1h-1zM287,170h1v1h-1zM295,164h1v1h-1zM295,170h1v1h-1zM303,164h1v1h-1zM303,170h1v1h-1zM311,164h1v1h-1zM311,170h1v1h-1zM319,164h1v1h-1zM319,170h1v1h-1zM327,164h1v1h-1zM327,170h1v1h-1zM335,164h1v1h-1zM335,170h1v1h-1zM343,164h1v1h-1zM343,170h1v1h-1zM351,164h1v1h-1zM351,170h1v1h-1zM359,164h1v1h-1zM359,170h1v1h-1zM367,164h1v1h-1zM367,170h1v1h-1zM375,164h1v1h-1zM375,170h1v1h-1zM383,164h1v1h-1zM383,170h1v1h-1zM391,164h1v1h-1zM391,170h1v1h-1zM399,164h1v1h-1zM399,170h1v1h-1zM407,164h1v1h-1zM407,170h1v1h-1zM415,164h1v1h-1zM415,170h1v1h-1zM423,164h1v1h-1zM423,170h1v1h-1zM431,164h1v1h-1zM431,170h1v1h-1zM439,164h1v1h-1zM439,170h1v1h-1zM447,164h1v1h-1zM447,170h1v1h-1zM455,164h1v1h-1zM455,170h1v1h-1zM463,164h1v1h-1zM463,170h1v1h-1zM471,164h1v1h-1zM471,170h1v1h-1zM479,164h1v1h-1zM479,170h1v1h-1zM487,164h1v1h-1zM487,170h1v1h-1zM495,164h1v1h-1zM495,170h1v1h-1zM503,164h1v1h-1zM503,170h1v1h-1zM511,164h1v1h-1zM511,170h1v1h-1zM519,164h1v1h-1zM519,170h1v1h-1zM527,164h1v1h-1zM527,170h1v1h-1zM535,164h1v1h-1zM535,170h1v1h-1zM543,164h1v1h-1zM543,170h1v1h-1zM551,164h1v1h-1zM551,170h1v1h-1zM559,164h1v1h-1zM559,170h1v1h-1zM567,164h1v1h-1zM567,170h1v1h-1zM575,164h1v1h-1zM575,170h1v1h-1zM583,164h1v1h-1zM583,170h1v1h-1zM591,164h1v1h-1zM591,170h1v1h-1zM599,164h1v1h-1zM599,170h1v1h-1zM607,164h1v1h-1zM607,170h1v1h-1zM615,164h1v1h-1zM615,170h1v1h-1zM623,164h1v1h-1zM623,170h1v1h-1zM631,164h1v1h-1zM631,170h1v1h-1zM639,164h1v1h-1zM639,170h1v1h-1zM647,164h1v1h-1zM647,170h1v1h-1zM655,164h1v1h-1zM655,170h1v1h-1zM663,164h1v1h-1zM663,170h1v1h-1zM671,164h1v1h-1zM671,170h1v1h-1zM679,164h1v1h-1zM679,170h1v1h-1zM687,164h1v1h-1zM687,170h1v1h-1zM695,164h1v1h-1zM695,170h1v1h-1zM703,164h1v1h-1zM703,170h1v1h-1zM711,164h1v1h-1zM711,170h1v1h-1zM719,164h1v1h-1zM719,170h1v1h-1zM727,164h1v1h-1zM727,170h1v1h-1zM735,164h1v1h-1zM735,170h1v1h-1zM743,164h1v1h-1zM743,170h1v1h-1zM751,164h1v1h-1zM751,170h1v1h-1zM759,164h1v1h-1zM759,170h1v1h-1zM767,164h1v1h-1zM767,170h1v1h-1zM775,164h1v1h-1zM775,170h1v1h-1zM783,164h1v1h-1zM783,170h1v1h-1zM791,164h1v1h-1zM791,170h1v1h-1zM799,164h1v1h-1zM799,170h1v1h-1zM807,164h1v1h-1zM807,170h1v1h-1zM815,164h1v1h-1zM815,170h1v1h-1zM823,164h1v1h-1zM823,170h1v1h-1zM831,164h1v1h-1zM831,170h1v1h-1zM839,164h1v1h-1zM839,170h1v1h-1zM847,164h1v1h-1zM847,170h1v1h-1zM855,164h1v1h-1zM855,170h1v1h-1zM863,164h1v1h-1zM863,170h1v1h-1zM871,164h1v1h-1zM871,170h1v1h-1zM879,164h1v1h-1zM879,170h1v1h-1zM887,164h1v1h-1zM887,170h1v1h-1zM895,164h1v1h-1zM895,170h1v1h-1zM903,164h1v1h-1zM903,170h1v1h-1zM911,164h1v1h-1zM911,170h1v1h-1zM919,164h1v1h-1zM919,170h1v1h-1zM927,164h1v1h-1zM927,170h1v1h-1zM935,164h1v1h-1zM935,170h1v1h-1zM943,164h1v1h-1zM943,170h1v1h-1z" fill="#0c0c78" opacity="0.45"/>
<text x="152" y="188" font-size="13" fill="#0c0c78" text-anchor="end" transform="matrix(1,0,0,1.08,0,-15.040)" >PGS1</text>
<rect x="157" y="182" width="792" height="3" fill="#fff"/>
<rect x="157" y="183" width="792" height="1" fill="#0c0c78"/>
<path d="M161,182h1v3h-1zM160,181h1v1h-1zM160,185h1v1h-1zM169,182h1v3h-1zM168,181h1v1h-1zM168,185h1v1h-1zM177,182h1v3h-1zM176,181h1v1h-1zM176,185h1v1h-1zM185,182h1v3h-1zM184,181h1v1h-1zM184,185h1v1h-1zM193,182h1v3h-1zM192,181h1v1h-1zM192,185h1v1h-1zM201,182h1v3h-1zM200,181h1v1h-1zM200,185h1v1h-1zM209,182h1v3h-1zM208,181h1v1h-1zM208,185h1v1h-1zM217,182h1v3h-1zM216,181h1v1h-1zM216,185h1v1h-1zM225,182h1v3h-1zM224,181h1v1h-1zM224,185h1v1h-1zM233,182h1v3h-1zM232,181h1v1h-1zM232,185h1v1h-1zM241,182h1v3h-1zM240,181h1v1h-1zM240,185h1v1h-1zM249,182h1v3h-1zM248,181h1v1h-1zM248,185h1v1h-1zM257,182h1v3h-1zM256,181h1v1h-1zM256,185h1v1h-1zM265,182h1v3h-1zM264,181h1v1h-1zM264,185h1v1h-1zM273,182h1v3h-1zM272,181h1v1h-1zM272,185h1v1h-1zM281,182h1v3h-1zM280,181h1v1h-1zM280,185h1v1h-1zM289,182h1v3h-1zM288,181h1v1h-1zM288,185h1v1h-1zM297,182h1v3h-1zM296,181h1v1h-1zM296,185h1v1h-1zM305,182h1v3h-1zM304,181h1v1h-1zM304,185h1v1h-1zM313,182h1v3h-1zM312,181h1v1h-1zM312,185h1v1h-1zM321,182h1v3h-1zM320,181h1v1h-1zM320,185h1v1h-1zM329,182h1v3h-1zM328,181h1v1h-1zM328,185h1v1h-1zM337,182h1v3h-1zM336,181h1v1h-1zM336,185h1v1h-1zM345,182h1v3h-1zM344,181h1v1h-1zM344,185h1v1h-1zM353,182h1v3h-1zM352,181h1v1h-1zM352,185h1v1h-1zM361,182h1v3h-1zM360,181h1v1h-1zM360,185h1v1h-1zM369,182h1v3h-1zM368,181h1v1h-1zM368,185h1v1h-1zM377,182h1v3h-1zM376,181h1v1h-1zM376,185h1v1h-1zM385,182h1v3h-1zM384,181h1v1h-1zM384,185h1v1h-1zM393,182h1v3h-1zM392,181h1v1h-1zM392,185h1v1h-1zM401,182h1v3h-1zM400,181h1v1h-1zM400,185h1v1h-1zM409,182h1v3h-1zM408,181h1v1h-1zM408,185h1v1h-1zM417,182h1v3h-1zM416,181h1v1h-1zM416,185h1v1h-1zM425,182h1v3h-1zM424,181h1v1h-1zM424,185h1v1h-1zM433,182h1v3h-1zM432,181h1v1h-1zM432,185h1v1h-1zM441,182h1v3h-1zM440,181h1v1h-1zM440,185h1v1h-1zM449,182h1v3h-1zM448,181h1v1h-1zM448,185h1v1h-1zM457,182h1v3h-1zM456,181h1v1h-1zM456,185h1v1h-1zM465,182h1v3h-1zM464,181h1v1h-1zM464,185h1v1h-1zM473,182h1v3h-1zM472,181h1v1h-1zM472,185h1v1h-1zM481,182h1v3h-1zM480,181h1v1h-1zM480,185h1v1h-1zM489,182h1v3h-1zM488,181h1v1h-1zM488,185h1v1h-1zM497,182h1v3h-1zM496,181h1v1h-1zM496,185h1v1h-1zM505,182h1v3h-1zM504,181h1v1h-1zM504,185h1v1h-1zM513,182h1v3h-1zM512,181h1v1h-1zM512,185h1v1h-1zM521,182h1v3h-1zM520,181h1v1h-1zM520,185h1v1h-1zM529,182h1v3h-1zM528,181h1v1h-1zM528,185h1v1h-1zM537,182h1v3h-1zM536,181h1v1h-1zM536,185h1v1h-1zM545,182h1v3h-1zM544,181h1v1h-1zM544,185h1v1h-1zM553,182h1v3h-1zM552,181h1v1h-1zM552,185h1v1h-1zM561,182h1v3h-1zM560,181h1v1h-1zM560,185h1v1h-1zM569,182h1v3h-1zM568,181h1v1h-1zM568,185h1v1h-1zM577,182h1v3h-1zM576,181h1v1h-1zM576,185h1v1h-1zM585,182h1v3h-1zM584,181h1v1h-1zM584,185h1v1h-1zM593,182h1v3h-1zM592,181h1v1h-1zM592,185h1v1h-1zM601,182h1v3h-1zM600,181h1v1h-1zM600,185h1v1h-1zM609,182h1v3h-1zM608,181h1v1h-1zM608,185h1v1h-1zM617,182h1v3h-1zM616,181h1v1h-1zM616,185h1v1h-1zM625,182h1v3h-1zM624,181h1v1h-1zM624,185h1v1h-1zM633,182h1v3h-1zM632,181h1v1h-1zM632,185h1v1h-1zM641,182h1v3h-1zM640,181h1v1h-1zM640,185h1v1h-1zM649,182h1v3h-1zM648,181h1v1h-1zM648,185h1v1h-1zM657,182h1v3h-1zM656,181h1v1h-1zM656,185h1v1h-1zM665,182h1v3h-1zM664,181h1v1h-1zM664,185h1v1h-1zM673,182h1v3h-1zM672,181h1v1h-1zM672,185h1v1h-1zM681,182h1v3h-1zM680,181h1v1h-1zM680,185h1v1h-1zM689,182h1v3h-1zM688,181h1v1h-1zM688,185h1v1h-1zM697,182h1v3h-1zM696,181h1v1h-1zM696,185h1v1h-1zM705,182h1v3h-1zM704,181h1v1h-1zM704,185h1v1h-1zM713,182h1v3h-1zM712,181h1v1h-1zM712,185h1v1h-1zM721,182h1v3h-1zM720,181h1v1h-1zM720,185h1v1h-1zM729,182h1v3h-1zM728,181h1v1h-1zM728,185h1v1h-1zM737,182h1v3h-1zM736,181h1v1h-1zM736,185h1v1h-1zM745,182h1v3h-1zM744,181h1v1h-1zM744,185h1v1h-1zM753,182h1v3h-1zM752,181h1v1h-1zM752,185h1v1h-1zM761,182h1v3h-1zM760,181h1v1h-1zM760,185h1v1h-1zM769,182h1v3h-1zM768,181h1v1h-1zM768,185h1v1h-1zM777,182h1v3h-1zM776,181h1v1h-1zM776,185h1v1h-1zM785,182h1v3h-1zM784,181h1v1h-1zM784,185h1v1h-1zM793,182h1v3h-1zM792,181h1v1h-1zM792,185h1v1h-1zM801,182h1v3h-1zM800,181h1v1h-1zM800,185h1v1h-1zM809,182h1v3h-1zM808,181h1v1h-1zM808,185h1v1h-1zM817,182h1v3h-1zM816,181h1v1h-1zM816,185h1v1h-1zM825,182h1v3h-1zM824,181h1v1h-1zM824,185h1v1h-1zM833,182h1v3h-1zM832,181h1v1h-1zM832,185h1v1h-1zM841,182h1v3h-1zM840,181h1v1h-1zM840,185h1v1h-1zM849,182h1v3h-1zM848,181h1v1h-1zM848,185h1v1h-1zM857,182h1v3h-1zM856,181h1v1h-1zM856,185h1v1h-1zM865,182h1v3h-1zM864,181h1v1h-1zM864,185h1v1h-1zM873,182h1v3h-1zM872,181h1v1h-1zM872,185h1v1h-1zM881,182h1v3h-1zM880,181h1v1h-1zM880,185h1v1h-1zM889,182h1v3h-1zM888,181h1v1h-1zM888,185h1v1h-1zM897,182h1v3h-1zM896,181h1v1h-1zM896,185h1v1h-1zM905,182h1v3h-1zM904,181h1v1h-1zM904,185h1v1h-1zM913,182h1v3h-1zM912,181h1v1h-1zM912,185h1v1h-1zM921,182h1v3h-1zM920,181h1v1h-1zM920,185h1v1h-1zM929,182h1v3h-1zM928,181h1v1h-1zM928,185h1v1h-1zM937,182h1v3h-1zM936,181h1v1h-1zM936,185h1v1h-1zM945,182h1v3h-1zM944,181h1v1h-1zM944,185h1v1h-1z" fill="#0c0c78"/>
<path d="M159,180h1v1h-1zM159,186h1v1h-1zM167,180h1v1h-1zM167,186h1v1h-1zM175,180h1v1h-1zM175,186h1v1h-1zM183,180h1v1h-1zM183,186h1v1h-1zM191,180h1v1h-1zM191,186h1v1h-1zM199,180h1v1h-1zM199,186h1v1h-1zM207,180h1v1h-1zM207,186h1v1h-1zM215,180h1v1h-1zM215,186h1v1h-1zM223,180h1v1h-1zM223,186h1v1h-1zM231,180h1v1h-1zM231,186h1v1h-1zM239,180h1v1h-1zM239,186h1v1h-1zM247,180h1v1h-1zM247,186h1v1h-1zM255,180h1v1h-1zM255,186h1v1h-1zM263,180h1v1h-1zM263,186h1v1h-1zM271,180h1v1h-1zM271,186h1v1h-1zM279,180h1v1h-1zM279,186h1v1h-1zM287,180h1v1h-1zM287,186h1v1h-1zM295,180h1v1h-1zM295,186h1v1h-1zM303,180h1v1h-1zM303,186h1v1h-1zM311,180h1v1h-1zM311,186h1v1h-1zM319,180h1v1h-1zM319,186h1v1h-1zM327,180h1v1h-1zM327,186h1v1h-1zM335,180h1v1h-1zM335,186h1v1h-1zM343,180h1v1h-1zM343,186h1v1h-1zM351,180h1v1h-1zM351,186h1v1h-1zM359,180h1v1h-1zM359,186h1v1h-1zM367,180h1v1h-1zM367,186h1v1h-1zM375,180h1v1h-1zM375,186h1v1h-1zM383,180h1v1h-1zM383,186h1v1h-1zM391,180h1v1h-1zM391,186h1v1h-1zM399,180h1v1h-1zM399,186h1v1h-1zM407,180h1v1h-1zM407,186h1v1h-1zM415,180h1v1h-1zM415,186h1v1h-1zM423,180h1v1h-1zM423,186h1v1h-1zM431,180h1v1h-1zM431,186h1v1h-1zM439,180h1v1h-1zM439,186h1v1h-1zM447,180h1v1h-1zM447,186h1v1h-1zM455,180h1v1h-1zM455,186h1v1h-1zM463,180h1v1h-1zM463,186h1v1h-1zM471,180h1v1h-1zM471,186h1v1h-1zM479,180h1v1h-1zM479,186h1v1h-1zM487,180h1v1h-1zM487,186h1v1h-1zM495,180h1v1h-1zM495,186h1v1h-1zM503,180h1v1h-1zM503,186h1v1h-1zM511,180h1v1h-1zM511,186h1v1h-1zM519,180h1v1h-1zM519,186h1v1h-1zM527,180h1v1h-1zM527,186h1v1h-1zM535,180h1v1h-1zM535,186h1v1h-1zM543,180h1v1h-1zM543,186h1v1h-1zM551,180h1v1h-1zM551,186h1v1h-1zM559,180h1v1h-1zM559,186h1v1h-1zM567,180h1v1h-1zM567,186h1v1h-1zM575,180h1v1h-1zM575,186h1v1h-1zM583,180h1v1h-1zM583,186h1v1h-1zM591,180h1v1h-1zM591,186h1v1h-1zM599,180h1v1h-1zM599,186h1v1h-1zM607,180h1v1h-1zM607,186h1v1h-1zM615,180h1v1h-1zM615,186h1v1h-1zM623,180h1v1h-1zM623,186h1v1h-1zM631,180h1v1h-1zM631,186h1v1h-1zM639,180h1v1h-1zM639,186h1v1h-1zM647,180h1v1h-1zM647,186h1v1h-1zM655,180h1v1h-1zM655,186h1v1h-1zM663,180h1v1h-1zM663,186h1v1h-1zM671,180h1v1h-1zM671,186h1v1h-1zM679,180h1v1h-1zM679,186h1v1h-1zM687,180h1v1h-1zM687,186h1v1h-1zM695,180h1v1h-1zM695,186h1v1h-1zM703,180h1v1h-1zM703,186h1v1h-1zM711,180h1v1h-1zM711,186h1v1h-1zM719,180h1v1h-1zM719,186h1v1h-1zM727,180h1v1h-1zM727,186h1v1h-1zM735,180h1v1h-1zM735,186h1v1h-1zM743,180h1v1h-1zM743,186h1v1h-1zM751,180h1v1h-1zM751,186h1v1h-1zM759,180h1v1h-1zM759,186h1v1h-1zM767,180h1v1h-1zM767,186h1v1h-1zM775,180h1v1h-1zM775,186h1v1h-1zM783,180h1v1h-1zM783,186h1v1h-1zM791,180h1v1h-1zM791,186h1v1h-1zM799,180h1v1h-1zM799,186h1v1h-1zM807,180h1v1h-1zM807,186h1v1h-1zM815,180h1v1h-1zM815,186h1v1h-1zM823,180h1v1h-1zM823,186h1v1h-1zM831,180h1v1h-1zM831,186h1v1h-1zM839,180h1v1h-1zM839,186h1v1h-1zM847,180h1v1h-1zM847,186h1v1h-1zM855,180h1v1h-1zM855,186h1v1h-1zM863,180h1v1h-1zM863,186h1v1h-1zM871,180h1v1h-1zM871,186h1v1h-1zM879,180h1v1h-1zM879,186h1v1h-1zM887,180h1v1h-1zM887,186h1v1h-1zM895,180h1v1h-1zM895,186h1v1h-1zM903,180h1v1h-1zM903,186h1v1h-1zM911,180h1v1h-1zM911,186h1v1h-1zM919,180h1v1h-1zM919,186h1v1h-1zM927,180h1v1h-1zM927,186h1v1h-1zM935,180h1v1h-1zM935,186h1v1h-1zM943,180h1v1h-1zM943,186h1v1h-1z" fill="#0c0c78" opacity="0.45"/>
<text x="152" y="204" font-size="13" fill="#0c0c78" text-anchor="end" transform="matrix(1,0,0,1.08,0,-16.320)" >PGS1</text>
<rect x="157" y="198" width="792" height="3" fill="#fff"/>
<rect x="157" y="199" width="792" height="1" fill="#0c0c78"/>
<path d="M161,198h1v3h-1zM160,197h1v1h-1zM160,201h1v1h-1zM169,198h1v3h-1zM168,197h1v1h-1zM168,201h1v1h-1zM177,198h1v3h-1zM176,197h1v1h-1zM176,201h1v1h-1zM185,198h1v3h-1zM184,197h1v1h-1zM184,201h1v1h-1zM193,198h1v3h-1zM192,197h1v1h-1zM192,201h1v1h-1zM201,198h1v3h-1zM200,197h1v1h-1zM200,201h1v1h-1zM209,198h1v3h-1zM208,197h1v1h-1zM208,201h1v1h-1zM217,198h1v3h-1zM216,197h1v1h-1zM216,201h1v1h-1zM225,198h1v3h-1zM224,197h1v1h-1zM224,201h1v1h-1zM233,198h1v3h-1zM232,197h1v1h-1zM232,201h1v1h-1zM241,198h1v3h-1zM240,197h1v1h-1zM240,201h1v1h-1zM249,198h1v3h-1zM248,197h1v1h-1zM248,201h1v1h-1zM257,198h1v3h-1zM256,197h1v1h-1zM256,201h1v1h-1zM265,198h1v3h-1zM264,197h1v1h-1zM264,201h1v1h-1zM273,198h1v3h-1zM272,197h1v1h-1zM272,201h1v1h-1zM281,198h1v3h-1zM280,197h1v1h-1zM280,201h1v1h-1zM289,198h1v3h-1zM288,197h1v1h-1zM288,201h1v1h-1zM297,198h1v3h-1zM296,197h1v1h-1zM296,201h1v1h-1zM305,198h1v3h-1zM304,197h1v1h-1zM304,201h1v1h-1zM313,198h1v3h-1zM312,197h1v1h-1zM312,201h1v1h-1zM321,198h1v3h-1zM320,197h1v1h-1zM320,201h1v1h-1zM329,198h1v3h-1zM328,197h1v1h-1zM328,201h1v1h-1zM337,198h1v3h-1zM336,197h1v1h-1zM336,201h1v1h-1zM345,198h1v3h-1zM344,197h1v1h-1zM344,201h1v1h-1zM353,198h1v3h-1zM352,197h1v1h-1zM352,201h1v1h-1zM361,198h1v3h-1zM360,197h1v1h-1zM360,201h1v1h-1zM369,198h1v3h-1zM368,197h1v1h-1zM368,201h1v1h-1zM377,198h1v3h-1zM376,197h1v1h-1zM376,201h1v1h-1zM385,198h1v3h-1zM384,197h1v1h-1zM384,201h1v1h-1zM393,198h1v3h-1zM392,197h1v1h-1zM392,201h1v1h-1zM401,198h1v3h-1zM400,197h1v1h-1zM400,201h1v1h-1zM409,198h1v3h-1zM408,197h1v1h-1zM408,201h1v1h-1zM417,198h1v3h-1zM416,197h1v1h-1zM416,201h1v1h-1zM425,198h1v3h-1zM424,197h1v1h-1zM424,201h1v1h-1zM433,198h1v3h-1zM432,197h1v1h-1zM432,201h1v1h-1zM441,198h1v3h-1zM440,197h1v1h-1zM440,201h1v1h-1zM449,198h1v3h-1zM448,197h1v1h-1zM448,201h1v1h-1zM457,198h1v3h-1zM456,197h1v1h-1zM456,201h1v1h-1zM465,198h1v3h-1zM464,197h1v1h-1zM464,201h1v1h-1zM473,198h1v3h-1zM472,197h1v1h-1zM472,201h1v1h-1zM481,198h1v3h-1zM480,197h1v1h-1zM480,201h1v1h-1zM489,198h1v3h-1zM488,197h1v1h-1zM488,201h1v1h-1zM497,198h1v3h-1zM496,197h1v1h-1zM496,201h1v1h-1zM505,198h1v3h-1zM504,197h1v1h-1zM504,201h1v1h-1zM513,198h1v3h-1zM512,197h1v1h-1zM512,201h1v1h-1zM521,198h1v3h-1zM520,197h1v1h-1zM520,201h1v1h-1zM529,198h1v3h-1zM528,197h1v1h-1zM528,201h1v1h-1zM537,198h1v3h-1zM536,197h1v1h-1zM536,201h1v1h-1zM545,198h1v3h-1zM544,197h1v1h-1zM544,201h1v1h-1zM553,198h1v3h-1zM552,197h1v1h-1zM552,201h1v1h-1zM561,198h1v3h-1zM560,197h1v1h-1zM560,201h1v1h-1zM569,198h1v3h-1zM568,197h1v1h-1zM568,201h1v1h-1zM577,198h1v3h-1zM576,197h1v1h-1zM576,201h1v1h-1zM585,198h1v3h-1zM584,197h1v1h-1zM584,201h1v1h-1zM593,198h1v3h-1zM592,197h1v1h-1zM592,201h1v1h-1zM601,198h1v3h-1zM600,197h1v1h-1zM600,201h1v1h-1zM609,198h1v3h-1zM608,197h1v1h-1zM608,201h1v1h-1zM617,198h1v3h-1zM616,197h1v1h-1zM616,201h1v1h-1zM625,198h1v3h-1zM624,197h1v1h-1zM624,201h1v1h-1zM633,198h1v3h-1zM632,197h1v1h-1zM632,201h1v1h-1zM641,198h1v3h-1zM640,197h1v1h-1zM640,201h1v1h-1zM649,198h1v3h-1zM648,197h1v1h-1zM648,201h1v1h-1zM657,198h1v3h-1zM656,197h1v1h-1zM656,201h1v1h-1zM665,198h1v3h-1zM664,197h1v1h-1zM664,201h1v1h-1zM673,198h1v3h-1zM672,197h1v1h-1zM672,201h1v1h-1zM681,198h1v3h-1zM680,197h1v1h-1zM680,201h1v1h-1zM689,198h1v3h-1zM688,197h1v1h-1zM688,201h1v1h-1zM697,198h1v3h-1zM696,197h1v1h-1zM696,201h1v1h-1zM705,198h1v3h-1zM704,197h1v1h-1zM704,201h1v1h-1zM713,198h1v3h-1zM712,197h1v1h-1zM712,201h1v1h-1zM721,198h1v3h-1zM720,197h1v1h-1zM720,201h1v1h-1zM729,198h1v3h-1zM728,197h1v1h-1zM728,201h1v1h-1zM737,198h1v3h-1zM736,197h1v1h-1zM736,201h1v1h-1zM745,198h1v3h-1zM744,197h1v1h-1zM744,201h1v1h-1zM753,198h1v3h-1zM752,197h1v1h-1zM752,201h1v1h-1zM761,198h1v3h-1zM760,197h1v1h-1zM760,201h1v1h-1zM769,198h1v3h-1zM768,197h1v1h-1zM768,201h1v1h-1zM777,198h1v3h-1zM776,197h1v1h-1zM776,201h1v1h-1zM785,198h1v3h-1zM784,197h1v1h-1zM784,201h1v1h-1zM793,198h1v3h-1zM792,197h1v1h-1zM792,201h1v1h-1zM801,198h1v3h-1zM800,197h1v1h-1zM800,201h1v1h-1zM809,198h1v3h-1zM808,197h1v1h-1zM808,201h1v1h-1zM817,198h1v3h-1zM816,197h1v1h-1zM816,201h1v1h-1zM825,198h1v3h-1zM824,197h1v1h-1zM824,201h1v1h-1zM833,198h1v3h-1zM832,197h1v1h-1zM832,201h1v1h-1zM841,198h1v3h-1zM840,197h1v1h-1zM840,201h1v1h-1zM849,198h1v3h-1zM848,197h1v1h-1zM848,201h1v1h-1zM857,198h1v3h-1zM856,197h1v1h-1zM856,201h1v1h-1zM865,198h1v3h-1zM864,197h1v1h-1zM864,201h1v1h-1zM873,198h1v3h-1zM872,197h1v1h-1zM872,201h1v1h-1zM881,198h1v3h-1zM880,197h1v1h-1zM880,201h1v1h-1zM889,198h1v3h-1zM888,197h1v1h-1zM888,201h1v1h-1zM897,198h1v3h-1zM896,197h1v1h-1zM896,201h1v1h-1zM905,198h1v3h-1zM904,197h1v1h-1zM904,201h1v1h-1zM913,198h1v3h-1zM912,197h1v1h-1zM912,201h1v1h-1zM921,198h1v3h-1zM920,197h1v1h-1zM920,201h1v1h-1zM929,198h1v3h-1zM928,197h1v1h-1zM928,201h1v1h-1zM937,198h1v3h-1zM936,197h1v1h-1zM936,201h1v1h-1zM945,198h1v3h-1zM944,197h1v1h-1zM944,201h1v1h-1z" fill="#0c0c78"/>
<path d="M159,196h1v1h-1zM159,202h1v1h-1zM167,196h1v1h-1zM167,202h1v1h-1zM175,196h1v1h-1zM175,202h1v1h-1zM183,196h1v1h-1zM183,202h1v1h-1zM191,196h1v1h-1zM191,202h1v1h-1zM199,196h1v1h-1zM199,202h1v1h-1zM207,196h1v1h-1zM207,202h1v1h-1zM215,196h1v1h-1zM215,202h1v1h-1zM223,196h1v1h-1zM223,202h1v1h-1zM231,196h1v1h-1zM231,202h1v1h-1zM239,196h1v1h-1zM239,202h1v1h-1zM247,196h1v1h-1zM247,202h1v1h-1zM255,196h1v1h-1zM255,202h1v1h-1zM263,196h1v1h-1zM263,202h1v1h-1zM271,196h1v1h-1zM271,202h1v1h-1zM279,196h1v1h-1zM279,202h1v1h-1zM287,196h1v1h-1zM287,202h1v1h-1zM295,196h1v1h-1zM295,202h1v1h-1zM303,196h1v1h-1zM303,202h1v1h-1zM311,196h1v1h-1zM311,202h1v1h-1zM319,196h1v1h-1zM319,202h1v1h-1zM327,196h1v1h-1zM327,202h1v1h-1zM335,196h1v1h-1zM335,202h1v1h-1zM343,196h1v1h-1zM343,202h1v1h-1zM351,196h1v1h-1zM351,202h1v1h-1zM359,196h1v1h-1zM359,202h1v1h-1zM367,196h1v1h-1zM367,202h1v1h-1zM375,196h1v1h-1zM375,202h1v1h-1zM383,196h1v1h-1zM383,202h1v1h-1zM391,196h1v1h-1zM391,202h1v1h-1zM399,196h1v1h-1zM399,202h1v1h-1zM407,196h1v1h-1zM407,202h1v1h-1zM415,196h1v1h-1zM415,202h1v1h-1zM423,196h1v1h-1zM423,202h1v1h-1zM431,196h1v1h-1zM431,202h1v1h-1zM439,196h1v1h-1zM439,202h1v1h-1zM447,196h1v1h-1zM447,202h1v1h-1zM455,196h1v1h-1zM455,202h1v1h-1zM463,196h1v1h-1zM463,202h1v1h-1zM471,196h1v1h-1zM471,202h1v1h-1zM479,196h1v1h-1zM479,202h1v1h-1zM487,196h1v1h-1zM487,202h1v1h-1zM495,196h1v1h-1zM495,202h1v1h-1zM503,196h1v1h-1zM503,202h1v1h-1zM511,196h1v1h-1zM511,202h1v1h-1zM519,196h1v1h-1zM519,202h1v1h-1zM527,196h1v1h-1zM527,202h1v1h-1zM535,196h1v1h-1zM535,202h1v1h-1zM543,196h1v1h-1zM543,202h1v1h-1zM551,196h1v1h-1zM551,202h1v1h-1zM559,196h1v1h-1zM559,202h1v1h-1zM567,196h1v1h-1zM567,202h1v1h-1zM575,196h1v1h-1zM575,202h1v1h-1zM583,196h1v1h-1zM583,202h1v1h-1zM591,196h1v1h-1zM591,202h1v1h-1zM599,196h1v1h-1zM599,202h1v1h-1zM607,196h1v1h-1zM607,202h1v1h-1zM615,196h1v1h-1zM615,202h1v1h-1zM623,196h1v1h-1zM623,202h1v1h-1zM631,196h1v1h-1zM631,202h1v1h-1zM639,196h1v1h-1zM639,202h1v1h-1zM647,196h1v1h-1zM647,202h1v1h-1zM655,196h1v1h-1zM655,202h1v1h-1zM663,196h1v1h-1zM663,202h1v1h-1zM671,196h1v1h-1zM671,202h1v1h-1zM679,196h1v1h-1zM679,202h1v1h-1zM687,196h1v1h-1zM687,202h1v1h-1zM695,196h1v1h-1zM695,202h1v1h-1zM703,196h1v1h-1zM703,202h1v1h-1zM711,196h1v1h-1zM711,202h1v1h-1zM719,196h1v1h-1zM719,202h1v1h-1zM727,196h1v1h-1zM727,202h1v1h-1zM735,196h1v1h-1zM735,202h1v1h-1zM743,196h1v1h-1zM743,202h1v1h-1zM751,196h1v1h-1zM751,202h1v1h-1zM759,196h1v1h-1zM759,202h1v1h-1zM767,196h1v1h-1zM767,202h1v1h-1zM775,196h1v1h-1zM775,202h1v1h-1zM783,196h1v1h-1zM783,202h1v1h-1zM791,196h1v1h-1zM791,202h1v1h-1zM799,196h1v1h-1zM799,202h1v1h-1zM807,196h1v1h-1zM807,202h1v1h-1zM815,196h1v1h-1zM815,202h1v1h-1zM823,196h1v1h-1zM823,202h1v1h-1zM831,196h1v1h-1zM831,202h1v1h-1zM839,196h1v1h-1zM839,202h1v1h-1zM847,196h1v1h-1zM847,202h1v1h-1zM855,196h1v1h-1zM855,202h1v1h-1zM863,196h1v1h-1zM863,202h1v1h-1zM871,196h1v1h-1zM871,202h1v1h-1zM879,196h1v1h-1zM879,202h1v1h-1zM887,196h1v1h-1zM887,202h1v1h-1zM895,196h1v1h-1zM895,202h1v1h-1zM903,196h1v1h-1zM903,202h1v1h-1zM911,196h1v1h-1zM911,202h1v1h-1zM919,196h1v1h-1zM919,202h1v1h-1zM927,196h1v1h-1zM927,202h1v1h-1zM935,196h1v1h-1zM935,202h1v1h-1zM943,196h1v1h-1zM943,202h1v1h-1z" fill="#0c0c78" opacity="0.45"/>
<text x="152" y="220" font-size="13" fill="#0c0c78" text-anchor="end" transform="matrix(1,0,0,1.08,0,-17.600)" >PGS1</text>
<rect x="157" y="214" width="792" height="3" fill="#fff"/>
<rect x="157" y="215" width="792" height="1" fill="#0c0c78"/>
<path d="M161,214h1v3h-1zM160,213h1v1h-1zM160,217h1v1h-1zM169,214h1v3h-1zM168,213h1v1h-1zM168,217h1v1h-1zM177,214h1v3h-1zM176,213h1v1h-1zM176,217h1v1h-1zM185,214h1v3h-1zM184,213h1v1h-1zM184,217h1v1h-1zM193,214h1v3h-1zM192,213h1v1h-1zM192,217h1v1h-1zM201,214h1v3h-1zM200,213h1v1h-1zM200,217h1v1h-1zM209,214h1v3h-1zM208,213h1v1h-1zM208,217h1v1h-1zM217,214h1v3h-1zM216,213h1v1h-1zM216,217h1v1h-1zM225,214h1v3h-1zM224,213h1v1h-1zM224,217h1v1h-1zM233,214h1v3h-1zM232,213h1v1h-1zM232,217h1v1h-1zM241,214h1v3h-1zM240,213h1v1h-1zM240,217h1v1h-1zM249,214h1v3h-1zM248,213h1v1h-1zM248,217h1v1h-1zM257,214h1v3h-1zM256,213h1v1h-1zM256,217h1v1h-1zM265,214h1v3h-1zM264,213h1v1h-1zM264,217h1v1h-1zM273,214h1v3h-1zM272,213h1v1h-1zM272,217h1v1h-1zM281,214h1v3h-1zM280,213h1v1h-1zM280,217h1v1h-1zM289,214h1v3h-1zM288,213h1v1h-1zM288,217h1v1h-1zM297,214h1v3h-1zM296,213h1v1h-1zM296,217h1v1h-1zM305,214h1v3h-1zM304,213h1v1h-1zM304,217h1v1h-1zM313,214h1v3h-1zM312,213h1v1h-1zM312,217h1v1h-1zM321,214h1v3h-1zM320,213h1v1h-1zM320,217h1v1h-1zM329,214h1v3h-1zM328,213h1v1h-1zM328,217h1v1h-1zM337,214h1v3h-1zM336,213h1v1h-1zM336,217h1v1h-1zM345,214h1v3h-1zM344,213h1v1h-1zM344,217h1v1h-1zM353,214h1v3h-1zM352,213h1v1h-1zM352,217h1v1h-1zM361,214h1v3h-1zM360,213h1v1h-1zM360,217h1v1h-1zM369,214h1v3h-1zM368,213h1v1h-1zM368,217h1v1h-1zM377,214h1v3h-1zM376,213h1v1h-1zM376,217h1v1h-1zM385,214h1v3h-1zM384,213h1v1h-1zM384,217h1v1h-1zM393,214h1v3h-1zM392,213h1v1h-1zM392,217h1v1h-1zM401,214h1v3h-1zM400,213h1v1h-1zM400,217h1v1h-1zM409,214h1v3h-1zM408,213h1v1h-1zM408,217h1v1h-1zM417,214h1v3h-1zM416,213h1v1h-1zM416,217h1v1h-1zM425,214h1v3h-1zM424,213h1v1h-1zM424,217h1v1h-1zM433,214h1v3h-1zM432,213h1v1h-1zM432,217h1v1h-1zM441,214h1v3h-1zM440,213h1v1h-1zM440,217h1v1h-1zM449,214h1v3h-1zM448,213h1v1h-1zM448,217h1v1h-1zM457,214h1v3h-1zM456,213h1v1h-1zM456,217h1v1h-1zM465,214h1v3h-1zM464,213h1v1h-1zM464,217h1v1h-1zM473,214h1v3h-1zM472,213h1v1h-1zM472,217h1v1h-1zM481,214h1v3h-1zM480,213h1v1h-1zM480,217h1v1h-1zM489,214h1v3h-1zM488,213h1v1h-1zM488,217h1v1h-1zM497,214h1v3h-1zM496,213h1v1h-1zM496,217h1v1h-1zM505,214h1v3h-1zM504,213h1v1h-1zM504,217h1v1h-1zM513,214h1v3h-1zM512,213h1v1h-1zM512,217h1v1h-1zM521,214h1v3h-1zM520,213h1v1h-1zM520,217h1v1h-1zM529,214h1v3h-1zM528,213h1v1h-1zM528,217h1v1h-1zM537,214h1v3h-1zM536,213h1v1h-1zM536,217h1v1h-1zM545,214h1v3h-1zM544,213h1v1h-1zM544,217h1v1h-1zM553,214h1v3h-1zM552,213h1v1h-1zM552,217h1v1h-1zM561,214h1v3h-1zM560,213h1v1h-1zM560,217h1v1h-1zM569,214h1v3h-1zM568,213h1v1h-1zM568,217h1v1h-1zM577,214h1v3h-1zM576,213h1v1h-1zM576,217h1v1h-1zM585,214h1v3h-1zM584,213h1v1h-1zM584,217h1v1h-1zM593,214h1v3h-1zM592,213h1v1h-1zM592,217h1v1h-1zM601,214h1v3h-1zM600,213h1v1h-1zM600,217h1v1h-1zM609,214h1v3h-1zM608,213h1v1h-1zM608,217h1v1h-1zM617,214h1v3h-1zM616,213h1v1h-1zM616,217h1v1h-1zM625,214h1v3h-1zM624,213h1v1h-1zM624,217h1v1h-1zM633,214h1v3h-1zM632,213h1v1h-1zM632,217h1v1h-1zM641,214h1v3h-1zM640,213h1v1h-1zM640,217h1v1h-1zM649,214h1v3h-1zM648,213h1v1h-1zM648,217h1v1h-1zM657,214h1v3h-1zM656,213h1v1h-1zM656,217h1v1h-1zM665,214h1v3h-1zM664,213h1v1h-1zM664,217h1v1h-1zM673,214h1v3h-1zM672,213h1v1h-1zM672,217h1v1h-1zM681,214h1v3h-1zM680,213h1v1h-1zM680,217h1v1h-1zM689,214h1v3h-1zM688,213h1v1h-1zM688,217h1v1h-1zM697,214h1v3h-1zM696,213h1v1h-1zM696,217h1v1h-1zM705,214h1v3h-1zM704,213h1v1h-1zM704,217h1v1h-1zM713,214h1v3h-1zM712,213h1v1h-1zM712,217h1v1h-1zM721,214h1v3h-1zM720,213h1v1h-1zM720,217h1v1h-1zM729,214h1v3h-1zM728,213h1v1h-1zM728,217h1v1h-1zM737,214h1v3h-1zM736,213h1v1h-1zM736,217h1v1h-1zM745,214h1v3h-1zM744,213h1v1h-1zM744,217h1v1h-1zM753,214h1v3h-1zM752,213h1v1h-1zM752,217h1v1h-1zM761,214h1v3h-1zM760,213h1v1h-1zM760,217h1v1h-1zM769,214h1v3h-1zM768,213h1v1h-1zM768,217h1v1h-1zM777,214h1v3h-1zM776,213h1v1h-1zM776,217h1v1h-1zM785,214h1v3h-1zM784,213h1v1h-1zM784,217h1v1h-1zM793,214h1v3h-1zM792,213h1v1h-1zM792,217h1v1h-1zM801,214h1v3h-1zM800,213h1v1h-1zM800,217h1v1h-1zM809,214h1v3h-1zM808,213h1v1h-1zM808,217h1v1h-1zM817,214h1v3h-1zM816,213h1v1h-1zM816,217h1v1h-1zM825,214h1v3h-1zM824,213h1v1h-1zM824,217h1v1h-1zM833,214h1v3h-1zM832,213h1v1h-1zM832,217h1v1h-1zM841,214h1v3h-1zM840,213h1v1h-1zM840,217h1v1h-1zM849,214h1v3h-1zM848,213h1v1h-1zM848,217h1v1h-1zM857,214h1v3h-1zM856,213h1v1h-1zM856,217h1v1h-1zM865,214h1v3h-1zM864,213h1v1h-1zM864,217h1v1h-1zM873,214h1v3h-1zM872,213h1v1h-1zM872,217h1v1h-1zM881,214h1v3h-1zM880,213h1v1h-1zM880,217h1v1h-1zM889,214h1v3h-1zM888,213h1v1h-1zM888,217h1v1h-1zM897,214h1v3h-1zM896,213h1v1h-1zM896,217h1v1h-1zM905,214h1v3h-1zM904,213h1v1h-1zM904,217h1v1h-1zM913,214h1v3h-1zM912,213h1v1h-1zM912,217h1v1h-1zM921,214h1v3h-1zM920,213h1v1h-1zM920,217h1v1h-1zM929,214h1v3h-1zM928,213h1v1h-1zM928,217h1v1h-1zM937,214h1v3h-1zM936,213h1v1h-1zM936,217h1v1h-1zM945,214h1v3h-1zM944,213h1v1h-1zM944,217h1v1h-1z" fill="#0c0c78"/>
<path d="M159,212h1v1h-1zM159,218h1v1h-1zM167,212h1v1h-1zM167,218h1v1h-1zM175,212h1v1h-1zM175,218h1v1h-1zM183,212h1v1h-1zM183,218h1v1h-1zM191,212h1v1h-1zM191,218h1v1h-1zM199,212h1v1h-1zM199,218h1v1h-1zM207,212h1v1h-1zM207,218h1v1h-1zM215,212h1v1h-1zM215,218h1v1h-1zM223,212h1v1h-1zM223,218h1v1h-1zM231,212h1v1h-1zM231,218h1v1h-1zM239,212h1v1h-1zM239,218h1v1h-1zM247,212h1v1h-1zM247,218h1v1h-1zM255,212h1v1h-1zM255,218h1v1h-1zM263,212h1v1h-1zM263,218h1v1h-1zM271,212h1v1h-1zM271,218h1v1h-1zM279,212h1v1h-1zM279,218h1v1h-1zM287,212h1v1h-1zM287,218h1v1h-1zM295,212h1v1h-1zM295,218h1v1h-1zM303,212h1v1h-1zM303,218h1v1h-1zM311,212h1v1h-1zM311,218h1v1h-1zM319,212h1v1h-1zM319,218h1v1h-1zM327,212h1v1h-1zM327,218h1v1h-1zM335,212h1v1h-1zM335,218h1v1h-1zM343,212h1v1h-1zM343,218h1v1h-1zM351,212h1v1h-1zM351,218h1v1h-1zM359,212h1v1h-1zM359,218h1v1h-1zM367,212h1v1h-1zM367,218h1v1h-1zM375,212h1v1h-1zM375,218h1v1h-1zM383,212h1v1h-1zM383,218h1v1h-1zM391,212h1v1h-1zM391,218h1v1h-1zM399,212h1v1h-1zM399,218h1v1h-1zM407,212h1v1h-1zM407,218h1v1h-1zM415,212h1v1h-1zM415,218h1v1h-1zM423,212h1v1h-1zM423,218h1v1h-1zM431,212h1v1h-1zM431,218h1v1h-1zM439,212h1v1h-1zM439,218h1v1h-1zM447,212h1v1h-1zM447,218h1v1h-1zM455,212h1v1h-1zM455,218h1v1h-1zM463,212h1v1h-1zM463,218h1v1h-1zM471,212h1v1h-1zM471,218h1v1h-1zM479,212h1v1h-1zM479,218h1v1h-1zM487,212h1v1h-1zM487,218h1v1h-1zM495,212h1v1h-1zM495,218h1v1h-1zM503,212h1v1h-1zM503,218h1v1h-1zM511,212h1v1h-1zM511,218h1v1h-1zM519,212h1v1h-1zM519,218h1v1h-1zM527,212h1v1h-1zM527,218h1v1h-1zM535,212h1v1h-1zM535,218h1v1h-1zM543,212h1v1h-1zM543,218h1v1h-1zM551,212h1v1h-1zM551,218h1v1h-1zM559,212h1v1h-1zM559,218h1v1h-1zM567,212h1v1h-1zM567,218h1v1h-1zM575,212h1v1h-1zM575,218h1v1h-1zM583,212h1v1h-1zM583,218h1v1h-1zM591,212h1v1h-1zM591,218h1v1h-1zM599,212h1v1h-1zM599,218h1v1h-1zM607,212h1v1h-1zM607,218h1v1h-1zM615,212h1v1h-1zM615,218h1v1h-1zM623,212h1v1h-1zM623,218h1v1h-1zM631,212h1v1h-1zM631,218h1v1h-1zM639,212h1v1h-1zM639,218h1v1h-1zM647,212h1v1h-1zM647,218h1v1h-1zM655,212h1v1h-1zM655,218h1v1h-1zM663,212h1v1h-1zM663,218h1v1h-1zM671,212h1v1h-1zM671,218h1v1h-1zM679,212h1v1h-1zM679,218h1v1h-1zM687,212h1v1h-1zM687,218h1v1h-1zM695,212h1v1h-1zM695,218h1v1h-1zM703,212h1v1h-1zM703,218h1v1h-1zM711,212h1v1h-1zM711,218h1v1h-1zM719,212h1v1h-1zM719,218h1v1h-1zM727,212h1v1h-1zM727,218h1v1h-1zM735,212h1v1h-1zM735,218h1v1h-1zM743,212h1v1h-1zM743,218h1v1h-1zM751,212h1v1h-1zM751,218h1v1h-1zM759,212h1v1h-1zM759,218h1v1h-1zM767,212h1v1h-1zM767,218h1v1h-1zM775,212h1v1h-1zM775,218h1v1h-1zM783,212h1v1h-1zM783,218h1v1h-1zM791,212h1v1h-1zM791,218h1v1h-1zM799,212h1v1h-1zM799,218h1v1h-1zM807,212h1v1h-1zM807,218h1v1h-1zM815,212h1v1h-1zM815,218h1v1h-1zM823,212h1v1h-1zM823,218h1v1h-1zM831,212h1v1h-1zM831,218h1v1h-1zM839,212h1v1h-1zM839,218h1v1h-1zM847,212h1v1h-1zM847,218h1v1h-1zM855,212h1v1h-1zM855,218h1v1h-1zM863,212h1v1h-1zM863,218h1v1h-1zM871,212h1v1h-1zM871,218h1v1h-1zM879,212h1v1h-1zM879,218h1v1h-1zM887,212h1v1h-1zM887,218h1v1h-1zM895,212h1v1h-1zM895,218h1v1h-1zM903,212h1v1h-1zM903,218h1v1h-1zM911,212h1v1h-1zM911,218h1v1h-1zM919,212h1v1h-1zM919,218h1v1h-1zM927,212h1v1h-1zM927,218h1v1h-1zM935,212h1v1h-1zM935,218h1v1h-1zM943,212h1v1h-1zM943,218h1v1h-1z" fill="#0c0c78" opacity="0.45"/>
<rect x="157" y="245" width="792" height="3" fill="#fff"/>
<rect x="157" y="246" width="792" height="1" fill="#0c0c78"/>
<text x="152" y="282" font-size="13" fill="#000" text-anchor="end" transform="matrix(1,0,0,1.08,0,-22.560)" >Sequences</text>
<text x="152" y="298" font-size="13" fill="#000" text-anchor="end" transform="matrix(1,0,0,1.08,0,-23.840)" >SNPs</text>
<rect x="156" y="317" width="793" height="15" fill="#bebebe"/>
<rect x="155.5" y="380.5" width="378" height="56" fill="#fff" stroke="#ececec" stroke-width="1"/>
<rect x="156" y="393" width="5" height="43" fill="#FFA54F"/>
<rect x="163" y="394" width="5" height="42" fill="#EE9A00"/>
<rect x="170" y="401" width="5" height="35" fill="#8FBC8F"/>
<rect x="177" y="395" width="5" height="41" fill="#8B1C62"/>
<rect x="184" y="395" width="5" height="41" fill="#EE6A50"/>
<rect x="191" y="395" width="5" height="41" fill="#FF0000"/>
<rect x="198" y="393" width="5" height="43" fill="#CDB79E"/>
<rect x="205" y="407" width="5" height="29" fill="#EEEE00"/>
<rect x="212" y="405" width="5" height="31" fill="#EEEE00"/>
<rect x="219" y="405" width="5" height="31" fill="#EEEE00"/>
<rect x="226" y="394" width="5" height="42" fill="#EEEE00"/>
<rect x="233" y="394" width="5" height="42" fill="#EEEE00"/>
<rect x="240" y="401" width="5" height="35" fill="#EEEE00"/>
<rect x="247" y="401" width="5" height="35" fill="#EEEE00"/>
<rect x="254" y="406" width="5" height="30" fill="#EEEE00"/>
<rect x="261" y="401" width="5" height="35" fill="#EEEE00"/>
<rect x="268" y="404" width="5" height="32" fill="#EEEE00"/>
<rect x="275" y="407" width="5" height="29" fill="#EEEE00"/>
<rect x="282" y="398" width="5" height="38" fill="#EEEE00"/>
<rect x="289" y="404" width="5" height="32" fill="#EEEE00"/>
<rect x="296" y="393" width="5" height="43" fill="#00CDCD"/>
<rect x="303" y="394" width="5" height="42" fill="#EE82EE"/>
<rect x="310" y="395" width="5" height="41" fill="#9AC0CD"/>
<rect x="317" y="390" width="5" height="46" fill="#EED5D2"/>
<rect x="324" y="389" width="5" height="47" fill="#EED5D2"/>
<rect x="331" y="396" width="5" height="40" fill="#CDB79E"/>
<rect x="338" y="398" width="5" height="38" fill="#EEC591"/>
<rect x="345" y="396" width="5" height="40" fill="#8B7355"/>
<rect x="352" y="401" width="5" height="35" fill="#8B7355"/>
<rect x="359" y="395" width="5" height="41" fill="#CDAA7D"/>
<rect x="366" y="391" width="5" height="45" fill="#EED5D2"/>
<rect x="373" y="406" width="5" height="30" fill="#B452CD"/>
<rect x="380" y="410" width="5" height="26" fill="#7A378B"/>
<rect x="387" y="403" width="5" height="33" fill="#CDB79E"/>
<rect x="394" y="397" width="5" height="39" fill="#CDB79E"/>
<rect x="401" y="412" width="5" height="24" fill="#CDB79E"/>
<rect x="408" y="385" width="5" height="51" fill="#9ACD32"/>
<rect x="415" y="398" width="5" height="38" fill="#CDB79E"/>
<rect x="422" y="406" width="5" height="30" fill="#7B68EE"/>
<rect x="429" y="390" width="5" height="46" fill="#FFD700"/>
<rect x="436" y="392" width="5" height="44" fill="#FFB6C1"/>
<rect x="443" y="410" width="5" height="26" fill="#CD9B1D"/>
<rect x="450" y="396" width="5" height="40" fill="#B4EEB4"/>
<rect x="457" y="394" width="5" height="42" fill="#D3D3D3"/>
<rect x="464" y="399" width="5" height="37" fill="#3A5FCD"/>
<rect x="471" y="398" width="5" height="38" fill="#1E90FF"/>
<rect x="478" y="395" width="5" height="41" fill="#CDB79E"/>
<rect x="485" y="387" width="5" height="49" fill="#CDB79E"/>
<rect x="492" y="401" width="5" height="35" fill="#FFD39B"/>
<rect x="499" y="396" width="5" height="40" fill="#A6A6A6"/>
<rect x="506" y="390" width="5" height="46" fill="#008B45"/>
<rect x="513" y="390" width="5" height="46" fill="#EED5D2"/>
<rect x="520" y="395" width="5" height="41" fill="#EED5D2"/>
<rect x="527" y="380" width="5" height="56" fill="#FF00FF"/>
<rect x="156" y="437" width="793" height="2" fill="#00007a"/>
<text x="152" y="415" font-size="13" fill="#000" text-anchor="end" transform="matrix(1,0,0,1.08,0,-33.200)" >PGS1</text>
<text x="13" y="468" font-size="13" fill="#000" text-anchor="start" transform="matrix(1,0,0,1.08,0,-37.440)" >Layered H3K27Ac</text>
<rect x="156" y="456" width="793" height="2" fill="#7f00ff"/>
<rect x="156" y="458" width="793" height="19" fill="#80d2fe"/>
<rect x="156" y="477" width="793" height="1" fill="#3f7ffe"/>
<rect x="156" y="478" width="793" height="6" fill="#3f1a62"/>
<rect x="296" y="477" width="653" height="3" fill="#4040d8"/>
<rect x="156" y="484" width="793" height="2" fill="#1a0630"/>
<text x="152" y="499" font-size="13" fill="#3c3c8c" text-anchor="end"  >4.88 _</text>
<text x="13" y="524" font-size="13" fill="#3c3c8c" text-anchor="start" transform="matrix(1,0,0,1.08,0,-41.920)" >100 Vert. Cons</text>
<text x="152" y="549" font-size="13" fill="#8c3c3c" text-anchor="end"  >-4.5 _</text>
<text transform="translate(389.84,528.00) scale(0.2929,0.1087)" font-size="200" fill="#00e600">T</text>
<text transform="translate(436.18,526.70) scale(0.2817,0.0500)" font-size="200" fill="#b0a000">C</text>
<text transform="translate(484.44,526.80) scale(0.2636,0.0131)" font-size="200" fill="#ff0000">A</text>
<text transform="translate(529.76,530.00) scale(0.2885,0.0145)" font-size="200" fill="#00e600">T</text>
<text transform="translate(575.54,526.80) scale(0.2920,0.0203)" font-size="200" fill="#00e600">T</text>
<text transform="translate(622.54,527.05) scale(0.2962,0.1239)" font-size="200" fill="#0000ff">G</text>
<text transform="translate(671.53,526.90) scale(0.2674,0.0445)" font-size="200" fill="#ff0000">A</text>
<text transform="translate(715.97,527.00) scale(0.2858,0.0217)" font-size="200" fill="#00e600">T</text>
<text transform="translate(762.84,527.00) scale(0.2929,0.0174)" font-size="200" fill="#00e600">T</text>
<text transform="translate(810.18,526.64) scale(0.2817,0.0282)" font-size="200" fill="#b0a000">C</text>
<text transform="translate(857.13,527.00) scale(0.2697,0.0234)" font-size="200" fill="#ff0000">A</text>
<rect x="345" y="526" width="35" height="1" fill="#ff0000" opacity="0.4"/>
<rect x="251" y="526" width="34" height="1" fill="#00e600" opacity="0.2"/>
<rect x="265" y="526" width="6" height="1.3" fill="#00e600"/>
<text x="151.5" y="580" font-size="13" fill="#e8900f" text-anchor="end" transform="matrix(1,0,0,1.08,0,-46.400)" >Gaps</text>
<text x="152.5" y="580" font-size="13" fill="#e8900f" text-anchor="start"  >1</text>
<text x="152" y="595" font-size="13" fill="#0c0c78" text-anchor="end" transform="matrix(1,0,0,1.08,0,-47.600)" >Human</text>
<text x="152" y="610" font-size="13" fill="#0c0c78" text-anchor="end" transform="matrix(1,0,0,1.08,0,-48.800)" >Rhesus</text>
<text x="152" y="625" font-size="13" fill="#0a640a" text-anchor="end" transform="matrix(1,0,0,1.08,0,-50.000)" >Mouse</text>
<text x="152" y="640" font-size="13" fill="#0c0c78" text-anchor="end" transform="matrix(1,0,0,1.08,0,-51.200)" >Dog</text>
<text x="152" y="655" font-size="13" fill="#0a640a" text-anchor="end" transform="matrix(1,0,0,1.08,0,-52.400)" >Elephant</text>
<text x="152" y="670" font-size="13" fill="#0a640a" text-anchor="end" transform="matrix(1,0,0,1.08,0,-53.600)" >Chicken</text>
<text x="152" y="685" font-size="13" fill="#0c0c78" text-anchor="end" transform="matrix(1,0,0,1.08,0,-54.800)" >X_tropicalis</text>
<text x="152" y="700" font-size="13" fill="#0a640a" text-anchor="end" transform="matrix(1,0,0,1.08,0,-56.000)" >Zebrafish</text>
<text x="176.8" y="595" font-size="13" fill="#0c0c78" text-anchor="middle" transform="matrix(1,0,0,1.08,0,-47.600)" >G</text>
<text x="223.5" y="595" font-size="13" fill="#0c0c78" text-anchor="middle" transform="matrix(1,0,0,1.08,0,-47.600)" >C</text>
<text x="270.2" y="595" font-size="13" fill="#0c0c78" text-anchor="middle" transform="matrix(1,0,0,1.08,0,-47.600)" >T</text>
<text x="317.0" y="595" font-size="13" fill="#0c0c78" text-anchor="middle" transform="matrix(1,0,0,1.08,0,-47.600)" >G</text>
<text x="363.7" y="595" font-size="13" fill="#0c0c78" text-anchor="middle" transform="matrix(1,0,0,1.08,0,-47.600)" >A</text>
<text x="410.4" y="595" font-size="13" fill="#0c0c78" text-anchor="middle" transform="matrix(1,0,0,1.08,0,-47.600)" >T</text>
<text x="457.1" y="595" font-size="13" fill="#0c0c78" text-anchor="middle" transform="matrix(1,0,0,1.08,0,-47.600)" >C</text>
<text x="503.8" y="595" font-size="13" fill="#0c0c78" text-anchor="middle" transform="matrix(1,0,0,1.08,0,-47.600)" >A</text>
<text x="550.6" y="595" font-size="13" fill="#0c0c78" text-anchor="middle" transform="matrix(1,0,0,1.08,0,-47.600)" >T</text>
<text x="597.3" y="595" font-size="13" fill="#0c0c78" text-anchor="middle" transform="matrix(1,0,0,1.08,0,-47.600)" >T</text>
<text x="644.0" y="595" font-size="13" fill="#0c0c78" text-anchor="middle" transform="matrix(1,0,0,1.08,0,-47.600)" >G</text>
<text x="690.7" y="595" font-size="13" fill="#0c0c78" text-anchor="middle" transform="matrix(1,0,0,1.08,0,-47.600)" >A</text>
<text x="737.4" y="595" font-size="13" fill="#0c0c78" text-anchor="middle" transform="matrix(1,0,0,1.08,0,-47.600)" >T</text>
<text x="784.2" y="595" font-size="13" fill="#0c0c78" text-anchor="middle" transform="matrix(1,0,0,1.08,0,-47.600)" >T</text>
<text x="830.9" y="595" font-size="13" fill="#0c0c78" text-anchor="middle" transform="matrix(1,0,0,1.08,0,-47.600)" >C</text>
<text x="877.6" y="595" font-size="13" fill="#0c0c78" text-anchor="middle" transform="matrix(1,0,0,1.08,0,-47.600)" >A</text>
<text x="924.3" y="595" font-size="13" fill="#0c0c78" text-anchor="middle" transform="matrix(1,0,0,1.08,0,-47.600)" >T</text>
<text x="176.8" y="610" font-size="13" fill="#0c0c78" text-anchor="middle" transform="matrix(1,0,0,1.08,0,-48.800)" >G</text>
<text x="223.5" y="610" font-size="13" fill="#0c0c78" text-anchor="middle" transform="matrix(1,0,0,1.08,0,-48.800)" >C</text>
<text x="270.2" y="610" font-size="13" fill="#0c0c78" text-anchor="middle" transform="matrix(1,0,0,1.08,0,-48.800)" >T</text>
<text x="317.0" y="610" font-size="13" fill="#0c0c78" text-anchor="middle" transform="matrix(1,0,0,1.08,0,-48.800)" >G</text>
<text x="363.7" y="610" font-size="13" fill="#0c0c78" text-anchor="middle" transform="matrix(1,0,0,1.08,0,-48.800)" >A</text>
<text x="410.4" y="610" font-size="13" fill="#0c0c78" text-anchor="middle" transform="matrix(1,0,0,1.08,0,-48.800)" >T</text>
<text x="457.1" y="610" font-size="13" fill="#0c0c78" text-anchor="middle" transform="matrix(1,0,0,1.08,0,-48.800)" >C</text>
<text x="503.8" y="610" font-size="13" fill="#0c0c78" text-anchor="middle" transform="matrix(1,0,0,1.08,0,-48.800)" >A</text>
<text x="550.6" y="610" font-size="13" fill="#0c0c78" text-anchor="middle" transform="matrix(1,0,0,1.08,0,-48.800)" >T</text>
<text x="597.3" y="610" font-size="13" fill="#0c0c78" text-anchor="middle" transform="matrix(1,0,0,1.08,0,-48.800)" >T</text>
<text x="644.0" y="610" font-size="13" fill="#0c0c78" text-anchor="middle" transform="matrix(1,0,0,1.08,0,-48.800)" >G</text>
<text x="690.7" y="610" font-size="13" fill="#0c0c78" text-anchor="middle" transform="matrix(1,0,0,1.08,0,-48.800)" >A</text>
<text x="737.4" y="610" font-size="13" fill="#0c0c78" text-anchor="middle" transform="matrix(1,0,0,1.08,0,-48.800)" >T</text>
<text x="784.2" y="610" font-size="13" fill="#0c0c78" text-anchor="middle" transform="matrix(1,0,0,1.08,0,-48.800)" >T</text>
<text x="830.9" y="610" font-size="13" fill="#0c0c78" text-anchor="middle" transform="matrix(1,0,0,1.08,0,-48.800)" >C</text>
<text x="877.6" y="610" font-size="13" fill="#0c0c78" text-anchor="middle" transform="matrix(1,0,0,1.08,0,-48.800)" >A</text>
<text x="924.3" y="610" font-size="13" fill="#0c0c78" text-anchor="middle" transform="matrix(1,0,0,1.08,0,-48.800)" >T</text>
<text x="176.8" y="625" font-size="13" fill="#8a8ab8" text-anchor="middle" transform="matrix(1,0,0,1.08,0,-50.000)" >T</text>
<text x="223.5" y="625" font-size="13" fill="#0c0c78" text-anchor="middle" transform="matrix(1,0,0,1.08,0,-50.000)" >C</text>
<text x="270.2" y="625" font-size="13" fill="#0c0c78" text-anchor="middle" transform="matrix(1,0,0,1.08,0,-50.000)" >T</text>
<text x="317.0" y="625" font-size="13" fill="#0c0c78" text-anchor="middle" transform="matrix(1,0,0,1.08,0,-50.000)" >G</text>
<text x="363.7" y="625" font-size="13" fill="#0c0c78" text-anchor="middle" transform="matrix(1,0,0,1.08,0,-50.000)" >A</text>
<text x="410.4" y="625" font-size="13" fill="#0c0c78" text-anchor="middle" transform="matrix(1,0,0,1.08,0,-50.000)" >T</text>
<text x="457.1" y="625" font-size="13" fill="#0c0c78" text-anchor="middle" transform="matrix(1,0,0,1.08,0,-50.000)" >C</text>
<text x="503.8" y="625" font-size="13" fill="#0c0c78" text-anchor="middle" transform="matrix(1,0,0,1.08,0,-50.000)" >A</text>
<text x="550.6" y="625" font-size="13" fill="#8a8ab8" text-anchor="middle" transform="matrix(1,0,0,1.08,0,-50.000)" >C</text>
<text x="597.3" y="625" font-size="13" fill="#0c0c78" text-anchor="middle" transform="matrix(1,0,0,1.08,0,-50.000)" >T</text>
<text x="644.0" y="625" font-size="13" fill="#0c0c78" text-anchor="middle" transform="matrix(1,0,0,1.08,0,-50.000)" >G</text>
<text x="690.7" y="625" font-size="13" fill="#0c0c78" text-anchor="middle" transform="matrix(1,0,0,1.08,0,-50.000)" >A</text>
<text x="737.4" y="625" font-size="13" fill="#0c0c78" text-anchor="middle" transform="matrix(1,0,0,1.08,0,-50.000)" >T</text>
<text x="784.2" y="625" font-size="13" fill="#0c0c78" text-anchor="middle" transform="matrix(1,0,0,1.08,0,-50.000)" >T</text>
<text x="830.9" y="625" font-size="13" fill="#0c0c78" text-anchor="middle" transform="matrix(1,0,0,1.08,0,-50.000)" >C</text>
<text x="877.6" y="625" font-size="13" fill="#0c0c78" text-anchor="middle" transform="matrix(1,0,0,1.08,0,-50.000)" >A</text>
<text x="924.3" y="625" font-size="13" fill="#0c0c78" text-anchor="middle" transform="matrix(1,0,0,1.08,0,-50.000)" >T</text>
<text x="176.8" y="640" font-size="13" fill="#8a8ab8" text-anchor="middle"  >-</text>
<text x="223.5" y="640" font-size="13" fill="#8a8ab8" text-anchor="middle"  >-</text>
<text x="270.2" y="640" font-size="13" fill="#0c0c78" text-anchor="middle" transform="matrix(1,0,0,1.08,0,-51.200)" >T</text>
<text x="317.0" y="640" font-size="13" fill="#0c0c78" text-anchor="middle" transform="matrix(1,0,0,1.08,0,-51.200)" >G</text>
<text x="363.7" y="640" font-size="13" fill="#0c0c78" text-anchor="middle" transform="matrix(1,0,0,1.08,0,-51.200)" >A</text>
<text x="410.4" y="640" font-size="13" fill="#0c0c78" text-anchor="middle" transform="matrix(1,0,0,1.08,0,-51.200)" >T</text>
<text x="457.1" y="640" font-size="13" fill="#0c0c78" text-anchor="middle" transform="matrix(1,0,0,1.08,0,-51.200)" >C</text>
<text x="503.8" y="640" font-size="13" fill="#8a8ab8" text-anchor="middle" transform="matrix(1,0,0,1.08,0,-51.200)" >G</text>
<text x="550.6" y="640" font-size="13" fill="#0c0c78" text-anchor="middle" transform="matrix(1,0,0,1.08,0,-51.200)" >T</text>
<text x="597.3" y="640" font-size="13" fill="#0c0c78" text-anchor="middle" transform="matrix(1,0,0,1.08,0,-51.200)" >T</text>
<text x="644.0" y="640" font-size="13" fill="#0c0c78" text-anchor="middle" transform="matrix(1,0,0,1.08,0,-51.200)" >G</text>
<text x="690.7" y="640" font-size="13" fill="#0c0c78" text-anchor="middle" transform="matrix(1,0,0,1.08,0,-51.200)" >A</text>
<text x="737.4" y="640" font-size="13" fill="#0c0c78" text-anchor="middle" transform="matrix(1,0,0,1.08,0,-51.200)" >T</text>
<text x="784.2" y="640" font-size="13" fill="#0c0c78" text-anchor="middle" transform="matrix(1,0,0,1.08,0,-51.200)" >T</text>
<text x="830.9" y="640" font-size="13" fill="#0c0c78" text-anchor="middle" transform="matrix(1,0,0,1.08,0,-51.200)" >C</text>
<text x="877.6" y="640" font-size="13" fill="#0c0c78" text-anchor="middle" transform="matrix(1,0,0,1.08,0,-51.200)" >A</text>
<text x="924.3" y="640" font-size="13" fill="#0c0c78" text-anchor="middle" transform="matrix(1,0,0,1.08,0,-51.200)" >T</text>
<text x="176.8" y="655" font-size="13" fill="#8a8ab8" text-anchor="middle" transform="matrix(1,0,0,1.08,0,-52.400)" >T</text>
<text x="223.5" y="655" font-size="13" fill="#8a8ab8" text-anchor="middle" transform="matrix(1,0,0,1.08,0,-52.400)" >A</text>
<text x="270.2" y="655" font-size="13" fill="#8a8ab8" text-anchor="middle" transform="matrix(1,0,0,1.08,0,-52.400)" >C</text>
<text x="317.0" y="655" font-size="13" fill="#0c0c78" text-anchor="middle" transform="matrix(1,0,0,1.08,0,-52.400)" >G</text>
<text x="363.7" y="655" font-size="13" fill="#8a8ab8" text-anchor="middle" transform="matrix(1,0,0,1.08,0,-52.400)" >G</text>
<text x="410.4" y="655" font-size="13" fill="#0c0c78" text-anchor="middle" transform="matrix(1,0,0,1.08,0,-52.400)" >T</text>
<text x="457.1" y="655" font-size="13" fill="#0c0c78" text-anchor="middle" transform="matrix(1,0,0,1.08,0,-52.400)" >C</text>
<text x="503.8" y="655" font-size="13" fill="#0c0c78" text-anchor="middle" transform="matrix(1,0,0,1.08,0,-52.400)" >A</text>
<text x="550.6" y="655" font-size="13" fill="#0c0c78" text-anchor="middle" transform="matrix(1,0,0,1.08,0,-52.400)" >T</text>
<text x="597.3" y="655" font-size="13" fill="#0c0c78" text-anchor="middle" transform="matrix(1,0,0,1.08,0,-52.400)" >T</text>
<text x="644.0" y="655" font-size="13" fill="#0c0c78" text-anchor="middle" transform="matrix(1,0,0,1.08,0,-52.400)" >G</text>
<text x="690.7" y="655" font-size="13" fill="#0c0c78" text-anchor="middle" transform="matrix(1,0,0,1.08,0,-52.400)" >A</text>
<text x="737.4" y="655" font-size="13" fill="#0c0c78" text-anchor="middle" transform="matrix(1,0,0,1.08,0,-52.400)" >T</text>
<text x="784.2" y="655" font-size="13" fill="#0c0c78" text-anchor="middle" transform="matrix(1,0,0,1.08,0,-52.400)" >T</text>
<text x="830.9" y="655" font-size="13" fill="#0c0c78" text-anchor="middle" transform="matrix(1,0,0,1.08,0,-52.400)" >C</text>
<text x="877.6" y="655" font-size="13" fill="#0c0c78" text-anchor="middle" transform="matrix(1,0,0,1.08,0,-52.400)" >A</text>
<text x="924.3" y="655" font-size="13" fill="#0c0c78" text-anchor="middle" transform="matrix(1,0,0,1.08,0,-52.400)" >T</text>
<text x="176.8" y="671" font-size="13" fill="#8a8ab8" text-anchor="middle" transform="matrix(1,0,0,1.08,0,-53.680)" >=</text>
<text x="223.5" y="671" font-size="13" fill="#8a8ab8" text-anchor="middle" transform="matrix(1,0,0,1.08,0,-53.680)" >=</text>
<text x="270.2" y="671" font-size="13" fill="#8a8ab8" text-anchor="middle" transform="matrix(1,0,0,1.08,0,-53.680)" >=</text>
<text x="317.0" y="671" font-size="13" fill="#8a8ab8" text-anchor="middle" transform="matrix(1,0,0,1.08,0,-53.680)" >=</text>
<text x="363.7" y="671" font-size="13" fill="#8a8ab8" text-anchor="middle" transform="matrix(1,0,0,1.08,0,-53.680)" >=</text>
<text x="410.4" y="671" font-size="13" fill="#8a8ab8" text-anchor="middle" transform="matrix(1,0,0,1.08,0,-53.680)" >=</text>
<text x="457.1" y="671" font-size="13" fill="#8a8ab8" text-anchor="middle" transform="matrix(1,0,0,1.08,0,-53.680)" >=</text>
<text x="503.8" y="671" font-size="13" fill="#8a8ab8" text-anchor="middle" transform="matrix(1,0,0,1.08,0,-53.680)" >=</text>
<text x="550.6" y="671" font-size="13" fill="#8a8ab8" text-anchor="middle" transform="matrix(1,0,0,1.08,0,-53.680)" >=</text>
<text x="597.3" y="671" font-size="13" fill="#8a8ab8" text-anchor="middle" transform="matrix(1,0,0,1.08,0,-53.680)" >=</text>
<text x="644.0" y="671" font-size="13" fill="#8a8ab8" text-anchor="middle" transform="matrix(1,0,0,1.08,0,-53.680)" >=</text>
<text x="690.7" y="671" font-size="13" fill="#8a8ab8" text-anchor="middle" transform="matrix(1,0,0,1.08,0,-53.680)" >=</text>
<text x="737.4" y="671" font-size="13" fill="#8a8ab8" text-anchor="middle" transform="matrix(1,0,0,1.08,0,-53.680)" >=</text>
<text x="784.2" y="671" font-size="13" fill="#8a8ab8" text-anchor="middle" transform="matrix(1,0,0,1.08,0,-53.680)" >=</text>
<text x="830.9" y="671" font-size="13" fill="#8a8ab8" text-anchor="middle" transform="matrix(1,0,0,1.08,0,-53.680)" >=</text>
<text x="877.6" y="671" font-size="13" fill="#8a8ab8" text-anchor="middle" transform="matrix(1,0,0,1.08,0,-53.680)" >=</text>
<text x="924.3" y="671" font-size="13" fill="#8a8ab8" text-anchor="middle" transform="matrix(1,0,0,1.08,0,-53.680)" >=</text>
<text x="176.8" y="686" font-size="13" fill="#8a8ab8" text-anchor="middle" transform="matrix(1,0,0,1.08,0,-54.880)" >=</text>
<text x="223.5" y="686" font-size="13" fill="#8a8ab8" text-anchor="middle" transform="matrix(1,0,0,1.08,0,-54.880)" >=</text>
<text x="270.2" y="686" font-size="13" fill="#8a8ab8" text-anchor="middle" transform="matrix(1,0,0,1.08,0,-54.880)" >=</text>
<text x="317.0" y="686" font-size="13" fill="#8a8ab8" text-anchor="middle" transform="matrix(1,0,0,1.08,0,-54.880)" >=</text>
<text x="363.7" y="686" font-size="13" fill="#8a8ab8" text-anchor="middle" transform="matrix(1,0,0,1.08,0,-54.880)" >=</text>
<text x="410.4" y="686" font-size="13" fill="#8a8ab8" text-anchor="middle" transform="matrix(1,0,0,1.08,0,-54.880)" >=</text>
<text x="457.1" y="686" font-size="13" fill="#8a8ab8" text-anchor="middle" transform="matrix(1,0,0,1.08,0,-54.880)" >=</text>
<text x="503.8" y="686" font-size="13" fill="#8a8ab8" text-anchor="middle" transform="matrix(1,0,0,1.08,0,-54.880)" >=</text>
<text x="550.6" y="686" font-size="13" fill="#8a8ab8" text-anchor="middle" transform="matrix(1,0,0,1.08,0,-54.880)" >=</text>
<text x="597.3" y="686" font-size="13" fill="#8a8ab8" text-anchor="middle" transform="matrix(1,0,0,1.08,0,-54.880)" >=</text>
<text x="644.0" y="686" font-size="13" fill="#8a8ab8" text-anchor="middle" transform="matrix(1,0,0,1.08,0,-54.880)" >=</text>
<text x="690.7" y="686" font-size="13" fill="#8a8ab8" text-anchor="middle" transform="matrix(1,0,0,1.08,0,-54.880)" >=</text>
<text x="737.4" y="686" font-size="13" fill="#8a8ab8" text-anchor="middle" transform="matrix(1,0,0,1.08,0,-54.880)" >=</text>
<text x="784.2" y="686" font-size="13" fill="#8a8ab8" text-anchor="middle" transform="matrix(1,0,0,1.08,0,-54.880)" >=</text>
<text x="830.9" y="686" font-size="13" fill="#8a8ab8" text-anchor="middle" transform="matrix(1,0,0,1.08,0,-54.880)" >=</text>
<text x="877.6" y="686" font-size="13" fill="#8a8ab8" text-anchor="middle" transform="matrix(1,0,0,1.08,0,-54.880)" >=</text>
<text x="924.3" y="686" font-size="13" fill="#8a8ab8" text-anchor="middle" transform="matrix(1,0,0,1.08,0,-54.880)" >=</text>
<rect x="156" y="642" width="1" height="14" fill="#e08a00"/>
<text x="152" y="730" font-size="13" fill="#000" text-anchor="end" transform="matrix(1,0,0,1.08,0,-58.400)" >RepeatMasker</text>
<text x="341.90" y="12" font-size="13" fill="#000" textLength="195.73" lengthAdjust="spacing" transform="matrix(1,0,0,1.08,0,-0.960)">Human Feb. 2009 (GRCh37/hg19)</text>
<text x="550.30" y="12" font-size="13" fill="#000" textLength="211.53" lengthAdjust="spacing" transform="matrix(1,0,0,1.08,0,-0.960)">chr17:76,377,698-76,377,714 (17 bp)</text>
<text x="432.00" y="78" font-size="13" fill="#000" textLength="239.33" lengthAdjust="spacing" transform="matrix(1,0,0,1.08,0,-6.240)">GENCODE V49lift37 (9 items filtered out)</text>
<text x="491.80" y="236" font-size="11" fill="#000" textLength="121.66" lengthAdjust="spacing" transform="matrix(1,0,0,1.08,0,-18.880)">RefSeq genes from NCBI</text>
<text x="445.70" y="267" font-size="11" fill="#000" textLength="212.40" lengthAdjust="spacing" transform="matrix(1,0,0,1.08,0,-21.360)">Publications: Sequences in Scientific Articles</text>
<text x="368.40" y="315" font-size="13" fill="#0a640a" textLength="368.43" lengthAdjust="spacing" transform="matrix(1,0,0,1.08,0,-25.200)">OMIM Gene Phenotypes - Dark Green Can Be Disease-causing</text>
<text x="436.30" y="345" font-size="11" fill="#000" textLength="231.32" lengthAdjust="spacing" transform="matrix(1,0,0,1.08,0,-27.600)">Short Genetic Variants from dbSNP release 155</text>
<text x="266.60" y="377" font-size="13" fill="#000" textLength="570.53" lengthAdjust="spacing" transform="matrix(1,0,0,1.08,0,-30.160)">Gene Expression in 54 tissues from GTEx RNA-seq of 17382 samples, 948 donors (V8, Aug 2019)</text>
<text x="280.60" y="454" font-size="13" fill="#000" textLength="541.27" lengthAdjust="spacing" transform="matrix(1,0,0,1.08,0,-36.320)">H3K27Ac Mark (Often Found Near Active Regulatory Elements) on 7 cell lines from ENCODE</text>
<text x="406.40" y="500" font-size="13" fill="#3c3c8c" textLength="292.67" lengthAdjust="spacing" transform="matrix(1,0,0,1.08,0,-40.000)">100 vertebrates Basewise Conservation by PhyloP</text>
<text x="444.60" y="566" font-size="13" fill="#0c0c78" textLength="213.50" lengthAdjust="spacing" transform="matrix(1,0,0,1.08,0,-45.280)">Multiz Alignments of 100 Vertebrates</text>
<text x="440.80" y="716" font-size="13" fill="#000" textLength="222.23" lengthAdjust="spacing" transform="matrix(1,0,0,1.08,0,-57.280)">Repeating Elements by RepeatMasker</text>
<text x="59.50" y="251" font-size="13" fill="#0c0c78" textLength="92.50" lengthAdjust="spacing" transform="matrix(1,0,0,1.08,0,-20.080)">RefSeq Curated</text>
<text x="74.30" y="329" font-size="13" fill="#0a640a" textLength="77.70" lengthAdjust="spacing" transform="matrix(1,0,0,1.08,0,-26.320)">OMIM Genes</text>
<text x="26.60" y="360" font-size="13" fill="#000" textLength="125.40" lengthAdjust="spacing" transform="matrix(1,0,0,1.08,0,-28.800)">Common dbSNP(155)</text>
</svg></body></html>
